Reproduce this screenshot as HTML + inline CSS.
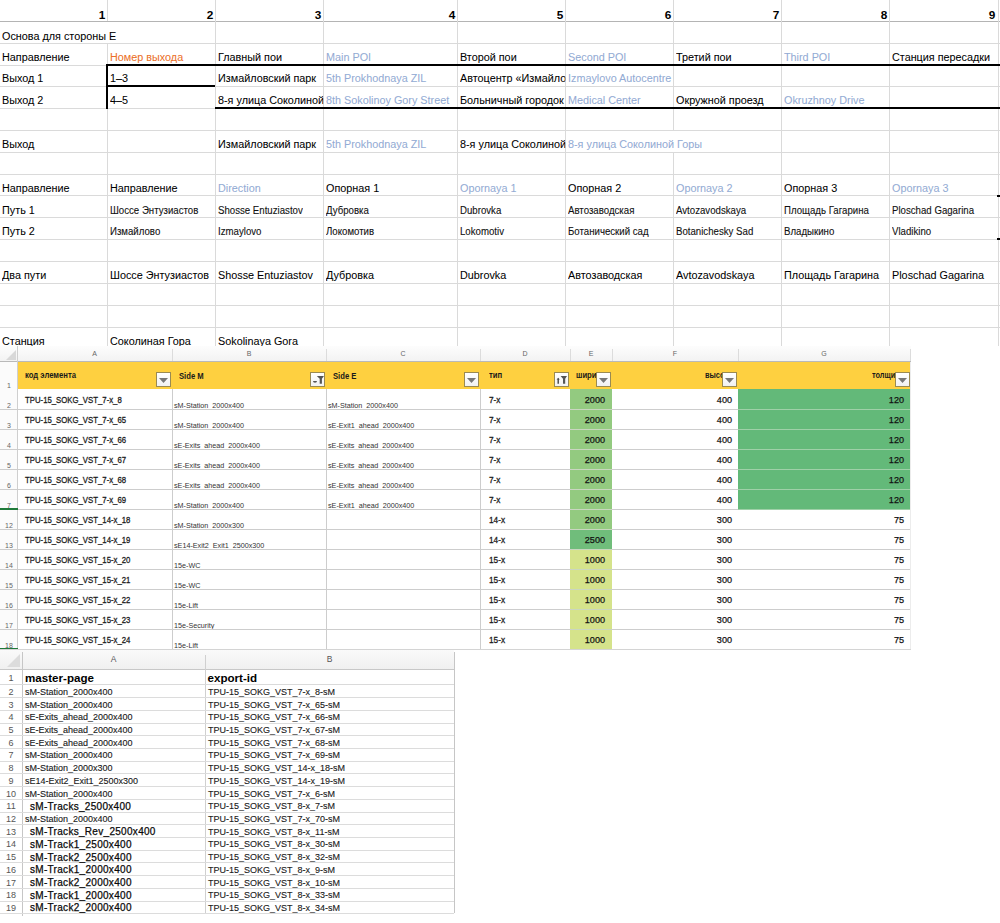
<!DOCTYPE html>
<html><head><meta charset="utf-8"><style>
html,body{margin:0;padding:0;background:#fff;}
body{width:1000px;height:923px;position:relative;overflow:hidden;font-family:"Liberation Sans", sans-serif;}
body div{position:absolute;}
</style></head><body>
<div style="top:10.01px;height:15.34px;font-family:'Liberation Sans', sans-serif;font-size:11.8px;line-height:11.8px;color:#000;font-weight:bold;white-space:pre;left:45.2px;width:60px;text-align:right;">1</div><div style="top:10.01px;height:15.34px;font-family:'Liberation Sans', sans-serif;font-size:11.8px;line-height:11.8px;color:#000;font-weight:bold;white-space:pre;left:153.2px;width:60px;text-align:right;">2</div><div style="top:10.01px;height:15.34px;font-family:'Liberation Sans', sans-serif;font-size:11.8px;line-height:11.8px;color:#000;font-weight:bold;white-space:pre;left:261.2px;width:60px;text-align:right;">3</div><div style="top:10.01px;height:15.34px;font-family:'Liberation Sans', sans-serif;font-size:11.8px;line-height:11.8px;color:#000;font-weight:bold;white-space:pre;left:395.2px;width:60px;text-align:right;">4</div><div style="top:10.01px;height:15.34px;font-family:'Liberation Sans', sans-serif;font-size:11.8px;line-height:11.8px;color:#000;font-weight:bold;white-space:pre;left:503.20000000000005px;width:60px;text-align:right;">5</div><div style="top:10.01px;height:15.34px;font-family:'Liberation Sans', sans-serif;font-size:11.8px;line-height:11.8px;color:#000;font-weight:bold;white-space:pre;left:611.2px;width:60px;text-align:right;">6</div><div style="top:10.01px;height:15.34px;font-family:'Liberation Sans', sans-serif;font-size:11.8px;line-height:11.8px;color:#000;font-weight:bold;white-space:pre;left:719.2px;width:60px;text-align:right;">7</div><div style="top:10.01px;height:15.34px;font-family:'Liberation Sans', sans-serif;font-size:11.8px;line-height:11.8px;color:#000;font-weight:bold;white-space:pre;left:827.2px;width:60px;text-align:right;">8</div><div style="top:10.01px;height:15.34px;font-family:'Liberation Sans', sans-serif;font-size:11.8px;line-height:11.8px;color:#000;font-weight:bold;white-space:pre;left:935.3px;width:60px;text-align:right;">9</div><div style="left:0px;top:21px;width:1000px;height:1px;background:#b4b4b4"></div><div style="left:0px;top:43px;width:1000px;height:1px;background:#dadada"></div><div style="left:0px;top:65px;width:1000px;height:1px;background:#dadada"></div><div style="left:0px;top:86px;width:1000px;height:1px;background:#dadada"></div><div style="left:0px;top:108px;width:1000px;height:1px;background:#dadada"></div><div style="left:0px;top:130px;width:1000px;height:1px;background:#dadada"></div><div style="left:0px;top:152px;width:1000px;height:1px;background:#dadada"></div><div style="left:0px;top:174px;width:1000px;height:1px;background:#dadada"></div><div style="left:0px;top:195px;width:1000px;height:1px;background:#dadada"></div><div style="left:0px;top:217px;width:1000px;height:1px;background:#dadada"></div><div style="left:0px;top:239px;width:1000px;height:1px;background:#dadada"></div><div style="left:0px;top:261px;width:1000px;height:1px;background:#dadada"></div><div style="left:0px;top:283px;width:1000px;height:1px;background:#dadada"></div><div style="left:0px;top:305px;width:1000px;height:1px;background:#dadada"></div><div style="left:0px;top:327px;width:1000px;height:1px;background:#dadada"></div><div style="left:215px;top:21px;width:1px;height:22px;background:#dadada"></div><div style="left:323px;top:21px;width:1px;height:22px;background:#dadada"></div><div style="left:457px;top:21px;width:1px;height:22px;background:#dadada"></div><div style="left:565px;top:21px;width:1px;height:22px;background:#dadada"></div><div style="left:673px;top:21px;width:1px;height:22px;background:#dadada"></div><div style="left:781px;top:21px;width:1px;height:22px;background:#dadada"></div><div style="left:889px;top:21px;width:1px;height:22px;background:#dadada"></div><div style="left:998px;top:21px;width:1px;height:22px;background:#dadada"></div><div style="left:107px;top:43px;width:1px;height:22px;background:#dadada"></div><div style="left:215px;top:43px;width:1px;height:22px;background:#dadada"></div><div style="left:323px;top:43px;width:1px;height:22px;background:#dadada"></div><div style="left:457px;top:43px;width:1px;height:22px;background:#dadada"></div><div style="left:565px;top:43px;width:1px;height:22px;background:#dadada"></div><div style="left:673px;top:43px;width:1px;height:22px;background:#dadada"></div><div style="left:781px;top:43px;width:1px;height:22px;background:#dadada"></div><div style="left:889px;top:43px;width:1px;height:22px;background:#dadada"></div><div style="left:998px;top:43px;width:1px;height:22px;background:#dadada"></div><div style="left:107px;top:65px;width:1px;height:21px;background:#dadada"></div><div style="left:215px;top:65px;width:1px;height:21px;background:#dadada"></div><div style="left:323px;top:65px;width:1px;height:21px;background:#dadada"></div><div style="left:457px;top:65px;width:1px;height:21px;background:#dadada"></div><div style="left:565px;top:65px;width:1px;height:21px;background:#dadada"></div><div style="left:673px;top:65px;width:1px;height:21px;background:#dadada"></div><div style="left:781px;top:65px;width:1px;height:21px;background:#dadada"></div><div style="left:889px;top:65px;width:1px;height:21px;background:#dadada"></div><div style="left:998px;top:65px;width:1px;height:21px;background:#dadada"></div><div style="left:107px;top:86px;width:1px;height:22px;background:#dadada"></div><div style="left:215px;top:86px;width:1px;height:22px;background:#dadada"></div><div style="left:323px;top:86px;width:1px;height:22px;background:#dadada"></div><div style="left:457px;top:86px;width:1px;height:22px;background:#dadada"></div><div style="left:565px;top:86px;width:1px;height:22px;background:#dadada"></div><div style="left:673px;top:86px;width:1px;height:22px;background:#dadada"></div><div style="left:781px;top:86px;width:1px;height:22px;background:#dadada"></div><div style="left:889px;top:86px;width:1px;height:22px;background:#dadada"></div><div style="left:998px;top:86px;width:1px;height:22px;background:#dadada"></div><div style="left:107px;top:108px;width:1px;height:22px;background:#dadada"></div><div style="left:215px;top:108px;width:1px;height:22px;background:#dadada"></div><div style="left:323px;top:108px;width:1px;height:22px;background:#dadada"></div><div style="left:457px;top:108px;width:1px;height:22px;background:#dadada"></div><div style="left:565px;top:108px;width:1px;height:22px;background:#dadada"></div><div style="left:673px;top:108px;width:1px;height:22px;background:#dadada"></div><div style="left:781px;top:108px;width:1px;height:22px;background:#dadada"></div><div style="left:889px;top:108px;width:1px;height:22px;background:#dadada"></div><div style="left:998px;top:108px;width:1px;height:22px;background:#dadada"></div><div style="left:107px;top:130px;width:1px;height:22px;background:#dadada"></div><div style="left:215px;top:130px;width:1px;height:22px;background:#dadada"></div><div style="left:323px;top:130px;width:1px;height:22px;background:#dadada"></div><div style="left:457px;top:130px;width:1px;height:22px;background:#dadada"></div><div style="left:565px;top:130px;width:1px;height:22px;background:#dadada"></div><div style="left:781px;top:130px;width:1px;height:22px;background:#dadada"></div><div style="left:889px;top:130px;width:1px;height:22px;background:#dadada"></div><div style="left:998px;top:130px;width:1px;height:22px;background:#dadada"></div><div style="left:107px;top:152px;width:1px;height:22px;background:#dadada"></div><div style="left:215px;top:152px;width:1px;height:22px;background:#dadada"></div><div style="left:323px;top:152px;width:1px;height:22px;background:#dadada"></div><div style="left:457px;top:152px;width:1px;height:22px;background:#dadada"></div><div style="left:565px;top:152px;width:1px;height:22px;background:#dadada"></div><div style="left:673px;top:152px;width:1px;height:22px;background:#dadada"></div><div style="left:781px;top:152px;width:1px;height:22px;background:#dadada"></div><div style="left:889px;top:152px;width:1px;height:22px;background:#dadada"></div><div style="left:998px;top:152px;width:1px;height:22px;background:#dadada"></div><div style="left:107px;top:174px;width:1px;height:21px;background:#dadada"></div><div style="left:215px;top:174px;width:1px;height:21px;background:#dadada"></div><div style="left:323px;top:174px;width:1px;height:21px;background:#dadada"></div><div style="left:457px;top:174px;width:1px;height:21px;background:#dadada"></div><div style="left:565px;top:174px;width:1px;height:21px;background:#dadada"></div><div style="left:673px;top:174px;width:1px;height:21px;background:#dadada"></div><div style="left:781px;top:174px;width:1px;height:21px;background:#dadada"></div><div style="left:889px;top:174px;width:1px;height:21px;background:#dadada"></div><div style="left:998px;top:174px;width:1px;height:21px;background:#dadada"></div><div style="left:107px;top:195px;width:1px;height:22px;background:#dadada"></div><div style="left:215px;top:195px;width:1px;height:22px;background:#dadada"></div><div style="left:323px;top:195px;width:1px;height:22px;background:#dadada"></div><div style="left:457px;top:195px;width:1px;height:22px;background:#dadada"></div><div style="left:565px;top:195px;width:1px;height:22px;background:#dadada"></div><div style="left:673px;top:195px;width:1px;height:22px;background:#dadada"></div><div style="left:781px;top:195px;width:1px;height:22px;background:#dadada"></div><div style="left:889px;top:195px;width:1px;height:22px;background:#dadada"></div><div style="left:998px;top:195px;width:1px;height:22px;background:#dadada"></div><div style="left:107px;top:217px;width:1px;height:22px;background:#dadada"></div><div style="left:215px;top:217px;width:1px;height:22px;background:#dadada"></div><div style="left:323px;top:217px;width:1px;height:22px;background:#dadada"></div><div style="left:457px;top:217px;width:1px;height:22px;background:#dadada"></div><div style="left:565px;top:217px;width:1px;height:22px;background:#dadada"></div><div style="left:673px;top:217px;width:1px;height:22px;background:#dadada"></div><div style="left:781px;top:217px;width:1px;height:22px;background:#dadada"></div><div style="left:889px;top:217px;width:1px;height:22px;background:#dadada"></div><div style="left:998px;top:217px;width:1px;height:22px;background:#dadada"></div><div style="left:107px;top:239px;width:1px;height:22px;background:#dadada"></div><div style="left:215px;top:239px;width:1px;height:22px;background:#dadada"></div><div style="left:323px;top:239px;width:1px;height:22px;background:#dadada"></div><div style="left:457px;top:239px;width:1px;height:22px;background:#dadada"></div><div style="left:565px;top:239px;width:1px;height:22px;background:#dadada"></div><div style="left:673px;top:239px;width:1px;height:22px;background:#dadada"></div><div style="left:781px;top:239px;width:1px;height:22px;background:#dadada"></div><div style="left:889px;top:239px;width:1px;height:22px;background:#dadada"></div><div style="left:998px;top:239px;width:1px;height:22px;background:#dadada"></div><div style="left:107px;top:261px;width:1px;height:22px;background:#dadada"></div><div style="left:215px;top:261px;width:1px;height:22px;background:#dadada"></div><div style="left:323px;top:261px;width:1px;height:22px;background:#dadada"></div><div style="left:457px;top:261px;width:1px;height:22px;background:#dadada"></div><div style="left:565px;top:261px;width:1px;height:22px;background:#dadada"></div><div style="left:673px;top:261px;width:1px;height:22px;background:#dadada"></div><div style="left:781px;top:261px;width:1px;height:22px;background:#dadada"></div><div style="left:889px;top:261px;width:1px;height:22px;background:#dadada"></div><div style="left:998px;top:261px;width:1px;height:22px;background:#dadada"></div><div style="left:107px;top:283px;width:1px;height:22px;background:#dadada"></div><div style="left:215px;top:283px;width:1px;height:22px;background:#dadada"></div><div style="left:323px;top:283px;width:1px;height:22px;background:#dadada"></div><div style="left:457px;top:283px;width:1px;height:22px;background:#dadada"></div><div style="left:565px;top:283px;width:1px;height:22px;background:#dadada"></div><div style="left:673px;top:283px;width:1px;height:22px;background:#dadada"></div><div style="left:781px;top:283px;width:1px;height:22px;background:#dadada"></div><div style="left:889px;top:283px;width:1px;height:22px;background:#dadada"></div><div style="left:998px;top:283px;width:1px;height:22px;background:#dadada"></div><div style="left:107px;top:305px;width:1px;height:22px;background:#dadada"></div><div style="left:215px;top:305px;width:1px;height:22px;background:#dadada"></div><div style="left:323px;top:305px;width:1px;height:22px;background:#dadada"></div><div style="left:457px;top:305px;width:1px;height:22px;background:#dadada"></div><div style="left:565px;top:305px;width:1px;height:22px;background:#dadada"></div><div style="left:673px;top:305px;width:1px;height:22px;background:#dadada"></div><div style="left:781px;top:305px;width:1px;height:22px;background:#dadada"></div><div style="left:889px;top:305px;width:1px;height:22px;background:#dadada"></div><div style="left:998px;top:305px;width:1px;height:22px;background:#dadada"></div><div style="left:107px;top:327px;width:1px;height:18.5px;background:#dadada"></div><div style="left:215px;top:327px;width:1px;height:18.5px;background:#dadada"></div><div style="left:323px;top:327px;width:1px;height:18.5px;background:#dadada"></div><div style="left:457px;top:327px;width:1px;height:18.5px;background:#dadada"></div><div style="left:565px;top:327px;width:1px;height:18.5px;background:#dadada"></div><div style="left:673px;top:327px;width:1px;height:18.5px;background:#dadada"></div><div style="left:781px;top:327px;width:1px;height:18.5px;background:#dadada"></div><div style="left:889px;top:327px;width:1px;height:18.5px;background:#dadada"></div><div style="left:998px;top:327px;width:1px;height:18.5px;background:#dadada"></div><div style="left:107px;top:0px;width:1px;height:21px;background:#dadada"></div><div style="left:215px;top:0px;width:1px;height:21px;background:#dadada"></div><div style="left:323px;top:0px;width:1px;height:21px;background:#dadada"></div><div style="left:457px;top:0px;width:1px;height:21px;background:#dadada"></div><div style="left:565px;top:0px;width:1px;height:21px;background:#dadada"></div><div style="left:673px;top:0px;width:1px;height:21px;background:#dadada"></div><div style="left:781px;top:0px;width:1px;height:21px;background:#dadada"></div><div style="left:889px;top:0px;width:1px;height:21px;background:#dadada"></div><div style="left:998px;top:0px;width:1px;height:21px;background:#dadada"></div><div style="left:107px;top:64px;width:893px;height:2px;background:#000"></div><div style="left:106px;top:64px;width:2px;height:45px;background:#000"></div><div style="left:107px;top:85px;width:108px;height:2px;background:#000"></div><div style="left:215px;top:107px;width:785px;height:2px;background:#000"></div><div style="left:997px;top:195px;width:3px;height:2px;background:#000"></div><div style="left:997px;top:238px;width:3px;height:2px;background:#000"></div><div style="top:29.60px;height:15.21px;font-family:'Liberation Sans', sans-serif;font-size:11.7px;line-height:11.7px;color:#000;font-weight:normal;white-space:pre;-webkit-text-stroke:0.05px #000;left:1.6px;transform:scaleX(0.925);transform-origin:0 0;width:1079.35px;overflow:hidden;">Основа для стороны E</div><div style="top:50.60px;height:15.21px;font-family:'Liberation Sans', sans-serif;font-size:11.7px;line-height:11.7px;color:#000;font-weight:normal;white-space:pre;-webkit-text-stroke:0.05px #000;left:1.6px;transform:scaleX(0.925);transform-origin:0 0;width:113.95px;overflow:hidden;">Направление</div><div style="top:50.60px;height:15.21px;font-family:'Liberation Sans', sans-serif;font-size:11.7px;line-height:11.7px;color:#ec7028;font-weight:normal;white-space:pre;-webkit-text-stroke:0.05px #ec7028;left:110px;transform:scaleX(0.925);transform-origin:0 0;width:113.51px;overflow:hidden;">Номер выхода</div><div style="top:50.60px;height:15.21px;font-family:'Liberation Sans', sans-serif;font-size:11.7px;line-height:11.7px;color:#000;font-weight:normal;white-space:pre;-webkit-text-stroke:0.05px #000;left:218px;transform:scaleX(0.925);transform-origin:0 0;width:113.51px;overflow:hidden;">Главный пои</div><div style="top:50.60px;height:15.21px;font-family:'Liberation Sans', sans-serif;font-size:11.7px;line-height:11.7px;color:#93abd4;font-weight:normal;white-space:pre;-webkit-text-stroke:0.05px #93abd4;left:326px;transform:scaleX(0.925);transform-origin:0 0;width:141.62px;overflow:hidden;">Main POI</div><div style="top:50.60px;height:15.21px;font-family:'Liberation Sans', sans-serif;font-size:11.7px;line-height:11.7px;color:#000;font-weight:normal;white-space:pre;-webkit-text-stroke:0.05px #000;left:460px;transform:scaleX(0.925);transform-origin:0 0;width:113.51px;overflow:hidden;">Второй пои</div><div style="top:50.60px;height:15.21px;font-family:'Liberation Sans', sans-serif;font-size:11.7px;line-height:11.7px;color:#93abd4;font-weight:normal;white-space:pre;-webkit-text-stroke:0.05px #93abd4;left:568px;transform:scaleX(0.925);transform-origin:0 0;width:113.51px;overflow:hidden;">Second POI</div><div style="top:50.60px;height:15.21px;font-family:'Liberation Sans', sans-serif;font-size:11.7px;line-height:11.7px;color:#000;font-weight:normal;white-space:pre;-webkit-text-stroke:0.05px #000;left:676px;transform:scaleX(0.925);transform-origin:0 0;width:113.51px;overflow:hidden;">Третий пои</div><div style="top:50.60px;height:15.21px;font-family:'Liberation Sans', sans-serif;font-size:11.7px;line-height:11.7px;color:#93abd4;font-weight:normal;white-space:pre;-webkit-text-stroke:0.05px #93abd4;left:784px;transform:scaleX(0.925);transform-origin:0 0;width:113.51px;overflow:hidden;">Third POI</div><div style="top:50.60px;height:15.21px;font-family:'Liberation Sans', sans-serif;font-size:11.7px;line-height:11.7px;color:#000;font-weight:normal;white-space:pre;-webkit-text-stroke:0.05px #000;left:892px;transform:scaleX(0.925);transform-origin:0 0;width:116.76px;overflow:hidden;">Станция пересадки</div><div style="top:72.10px;height:15.21px;font-family:'Liberation Sans', sans-serif;font-size:11.7px;line-height:11.7px;color:#000;font-weight:normal;white-space:pre;-webkit-text-stroke:0.05px #000;left:1.6px;transform:scaleX(0.925);transform-origin:0 0;width:113.95px;overflow:hidden;">Выход 1</div><div style="top:72.10px;height:15.21px;font-family:'Liberation Sans', sans-serif;font-size:11.7px;line-height:11.7px;color:#000;font-weight:normal;white-space:pre;-webkit-text-stroke:0.05px #000;left:110px;transform:scaleX(0.925);transform-origin:0 0;width:113.51px;overflow:hidden;">1–3</div><div style="top:72.10px;height:15.21px;font-family:'Liberation Sans', sans-serif;font-size:11.7px;line-height:11.7px;color:#000;font-weight:normal;white-space:pre;-webkit-text-stroke:0.05px #000;left:218px;transform:scaleX(0.925);transform-origin:0 0;width:113.51px;overflow:hidden;">Измайловский парк</div><div style="top:72.10px;height:15.21px;font-family:'Liberation Sans', sans-serif;font-size:11.7px;line-height:11.7px;color:#93abd4;font-weight:normal;white-space:pre;-webkit-text-stroke:0.05px #93abd4;left:326px;transform:scaleX(0.925);transform-origin:0 0;width:141.62px;overflow:hidden;">5th Prokhodnaya ZIL</div><div style="top:72.10px;height:15.21px;font-family:'Liberation Sans', sans-serif;font-size:11.7px;line-height:11.7px;color:#000;font-weight:normal;white-space:pre;-webkit-text-stroke:0.05px #000;left:460px;transform:scaleX(0.925);transform-origin:0 0;width:113.51px;overflow:hidden;">Автоцентр «Измайловский»</div><div style="top:72.10px;height:15.21px;font-family:'Liberation Sans', sans-serif;font-size:11.7px;line-height:11.7px;color:#93abd4;font-weight:normal;white-space:pre;-webkit-text-stroke:0.05px #93abd4;left:568px;transform:scaleX(0.925);transform-origin:0 0;width:467.03px;overflow:hidden;">Izmaylovo Autocentre</div><div style="top:94.10px;height:15.21px;font-family:'Liberation Sans', sans-serif;font-size:11.7px;line-height:11.7px;color:#000;font-weight:normal;white-space:pre;-webkit-text-stroke:0.05px #000;left:1.6px;transform:scaleX(0.925);transform-origin:0 0;width:113.95px;overflow:hidden;">Выход 2</div><div style="top:94.10px;height:15.21px;font-family:'Liberation Sans', sans-serif;font-size:11.7px;line-height:11.7px;color:#000;font-weight:normal;white-space:pre;-webkit-text-stroke:0.05px #000;left:110px;transform:scaleX(0.925);transform-origin:0 0;width:113.51px;overflow:hidden;">4–5</div><div style="top:94.10px;height:15.21px;font-family:'Liberation Sans', sans-serif;font-size:11.7px;line-height:11.7px;color:#000;font-weight:normal;white-space:pre;-webkit-text-stroke:0.05px #000;left:218px;transform:scaleX(0.925);transform-origin:0 0;width:113.51px;overflow:hidden;">8-я улица Соколиной Горы</div><div style="top:94.10px;height:15.21px;font-family:'Liberation Sans', sans-serif;font-size:11.7px;line-height:11.7px;color:#93abd4;font-weight:normal;white-space:pre;-webkit-text-stroke:0.05px #93abd4;left:326px;transform:scaleX(0.925);transform-origin:0 0;width:141.62px;overflow:hidden;">8th Sokolinoy Gory Street</div><div style="top:94.10px;height:15.21px;font-family:'Liberation Sans', sans-serif;font-size:11.7px;line-height:11.7px;color:#000;font-weight:normal;white-space:pre;-webkit-text-stroke:0.05px #000;left:460px;transform:scaleX(0.925);transform-origin:0 0;width:113.51px;overflow:hidden;">Больничный городок</div><div style="top:94.10px;height:15.21px;font-family:'Liberation Sans', sans-serif;font-size:11.7px;line-height:11.7px;color:#93abd4;font-weight:normal;white-space:pre;-webkit-text-stroke:0.05px #93abd4;left:568px;transform:scaleX(0.925);transform-origin:0 0;width:113.51px;overflow:hidden;">Medical Center</div><div style="top:94.10px;height:15.21px;font-family:'Liberation Sans', sans-serif;font-size:11.7px;line-height:11.7px;color:#000;font-weight:normal;white-space:pre;-webkit-text-stroke:0.05px #000;left:676px;transform:scaleX(0.925);transform-origin:0 0;width:113.51px;overflow:hidden;">Окружной проезд</div><div style="top:94.10px;height:15.21px;font-family:'Liberation Sans', sans-serif;font-size:11.7px;line-height:11.7px;color:#93abd4;font-weight:normal;white-space:pre;-webkit-text-stroke:0.05px #93abd4;left:784px;transform:scaleX(0.925);transform-origin:0 0;width:233.51px;overflow:hidden;">Okruzhnoy Drive</div><div style="top:138.10px;height:15.21px;font-family:'Liberation Sans', sans-serif;font-size:11.7px;line-height:11.7px;color:#000;font-weight:normal;white-space:pre;-webkit-text-stroke:0.05px #000;left:1.6px;transform:scaleX(0.925);transform-origin:0 0;width:230.70px;overflow:hidden;">Выход</div><div style="top:138.10px;height:15.21px;font-family:'Liberation Sans', sans-serif;font-size:11.7px;line-height:11.7px;color:#000;font-weight:normal;white-space:pre;-webkit-text-stroke:0.05px #000;left:218px;transform:scaleX(0.925);transform-origin:0 0;width:113.51px;overflow:hidden;">Измайловский парк</div><div style="top:138.10px;height:15.21px;font-family:'Liberation Sans', sans-serif;font-size:11.7px;line-height:11.7px;color:#93abd4;font-weight:normal;white-space:pre;-webkit-text-stroke:0.05px #93abd4;left:326px;transform:scaleX(0.925);transform-origin:0 0;width:141.62px;overflow:hidden;">5th Prokhodnaya ZIL</div><div style="top:138.10px;height:15.21px;font-family:'Liberation Sans', sans-serif;font-size:11.7px;line-height:11.7px;color:#000;font-weight:normal;white-space:pre;-webkit-text-stroke:0.05px #000;left:460px;transform:scaleX(0.925);transform-origin:0 0;width:113.51px;overflow:hidden;">8-я улица Соколиной Горы</div><div style="top:138.10px;height:15.21px;font-family:'Liberation Sans', sans-serif;font-size:11.7px;line-height:11.7px;color:#93abd4;font-weight:normal;white-space:pre;-webkit-text-stroke:0.05px #93abd4;left:568px;transform:scaleX(0.925);transform-origin:0 0;width:467.03px;overflow:hidden;">8-я улица Соколиной Горы</div><div style="top:181.60px;height:15.21px;font-family:'Liberation Sans', sans-serif;font-size:11.7px;line-height:11.7px;color:#000;font-weight:normal;white-space:pre;-webkit-text-stroke:0.05px #000;left:1.6px;transform:scaleX(0.925);transform-origin:0 0;width:113.95px;overflow:hidden;">Направление</div><div style="top:181.60px;height:15.21px;font-family:'Liberation Sans', sans-serif;font-size:11.7px;line-height:11.7px;color:#000;font-weight:normal;white-space:pre;-webkit-text-stroke:0.05px #000;left:110px;transform:scaleX(0.925);transform-origin:0 0;width:113.51px;overflow:hidden;">Направление</div><div style="top:181.60px;height:15.21px;font-family:'Liberation Sans', sans-serif;font-size:11.7px;line-height:11.7px;color:#93abd4;font-weight:normal;white-space:pre;-webkit-text-stroke:0.05px #93abd4;left:218px;transform:scaleX(0.925);transform-origin:0 0;width:113.51px;overflow:hidden;">Direction</div><div style="top:181.60px;height:15.21px;font-family:'Liberation Sans', sans-serif;font-size:11.7px;line-height:11.7px;color:#000;font-weight:normal;white-space:pre;-webkit-text-stroke:0.05px #000;left:326px;transform:scaleX(0.925);transform-origin:0 0;width:141.62px;overflow:hidden;">Опорная 1</div><div style="top:181.60px;height:15.21px;font-family:'Liberation Sans', sans-serif;font-size:11.7px;line-height:11.7px;color:#93abd4;font-weight:normal;white-space:pre;-webkit-text-stroke:0.05px #93abd4;left:460px;transform:scaleX(0.925);transform-origin:0 0;width:113.51px;overflow:hidden;">Opornaya 1</div><div style="top:181.60px;height:15.21px;font-family:'Liberation Sans', sans-serif;font-size:11.7px;line-height:11.7px;color:#000;font-weight:normal;white-space:pre;-webkit-text-stroke:0.05px #000;left:568px;transform:scaleX(0.925);transform-origin:0 0;width:113.51px;overflow:hidden;">Опорная 2</div><div style="top:181.60px;height:15.21px;font-family:'Liberation Sans', sans-serif;font-size:11.7px;line-height:11.7px;color:#93abd4;font-weight:normal;white-space:pre;-webkit-text-stroke:0.05px #93abd4;left:676px;transform:scaleX(0.925);transform-origin:0 0;width:113.51px;overflow:hidden;">Opornaya 2</div><div style="top:181.60px;height:15.21px;font-family:'Liberation Sans', sans-serif;font-size:11.7px;line-height:11.7px;color:#000;font-weight:normal;white-space:pre;-webkit-text-stroke:0.05px #000;left:784px;transform:scaleX(0.925);transform-origin:0 0;width:113.51px;overflow:hidden;">Опорная 3</div><div style="top:181.60px;height:15.21px;font-family:'Liberation Sans', sans-serif;font-size:11.7px;line-height:11.7px;color:#93abd4;font-weight:normal;white-space:pre;-webkit-text-stroke:0.05px #93abd4;left:892px;transform:scaleX(0.925);transform-origin:0 0;width:116.76px;overflow:hidden;">Opornaya 3</div><div style="top:203.60px;height:15.21px;font-family:'Liberation Sans', sans-serif;font-size:11.7px;line-height:11.7px;color:#000;font-weight:normal;white-space:pre;-webkit-text-stroke:0.05px #000;left:1.6px;transform:scaleX(0.925);transform-origin:0 0;width:113.95px;overflow:hidden;">Путь 1</div><div style="top:205.53px;height:13.00px;font-family:'Liberation Sans', sans-serif;font-size:10px;line-height:10px;color:#111;font-weight:normal;white-space:pre;-webkit-text-stroke:0.1px #111;left:110px;transform:scaleX(0.965);transform-origin:0 0;width:108.81px;overflow:hidden;">Шоссе Энтузиастов</div><div style="top:205.53px;height:13.00px;font-family:'Liberation Sans', sans-serif;font-size:10px;line-height:10px;color:#111;font-weight:normal;white-space:pre;-webkit-text-stroke:0.1px #111;left:218px;transform:scaleX(0.965);transform-origin:0 0;width:108.81px;overflow:hidden;">Shosse Entuziastov</div><div style="top:205.53px;height:13.00px;font-family:'Liberation Sans', sans-serif;font-size:10px;line-height:10px;color:#111;font-weight:normal;white-space:pre;-webkit-text-stroke:0.1px #111;left:326px;transform:scaleX(0.965);transform-origin:0 0;width:135.75px;overflow:hidden;">Дубровка</div><div style="top:205.53px;height:13.00px;font-family:'Liberation Sans', sans-serif;font-size:10px;line-height:10px;color:#111;font-weight:normal;white-space:pre;-webkit-text-stroke:0.1px #111;left:460px;transform:scaleX(0.965);transform-origin:0 0;width:108.81px;overflow:hidden;">Dubrovka</div><div style="top:205.53px;height:13.00px;font-family:'Liberation Sans', sans-serif;font-size:10px;line-height:10px;color:#111;font-weight:normal;white-space:pre;-webkit-text-stroke:0.1px #111;left:568px;transform:scaleX(0.965);transform-origin:0 0;width:108.81px;overflow:hidden;">Автозаводская</div><div style="top:205.53px;height:13.00px;font-family:'Liberation Sans', sans-serif;font-size:10px;line-height:10px;color:#111;font-weight:normal;white-space:pre;-webkit-text-stroke:0.1px #111;left:676px;transform:scaleX(0.965);transform-origin:0 0;width:108.81px;overflow:hidden;">Avtozavodskaya</div><div style="top:205.53px;height:13.00px;font-family:'Liberation Sans', sans-serif;font-size:10px;line-height:10px;color:#111;font-weight:normal;white-space:pre;-webkit-text-stroke:0.1px #111;left:784px;transform:scaleX(0.965);transform-origin:0 0;width:108.81px;overflow:hidden;">Площадь Гагарина</div><div style="top:205.53px;height:13.00px;font-family:'Liberation Sans', sans-serif;font-size:10px;line-height:10px;color:#111;font-weight:normal;white-space:pre;-webkit-text-stroke:0.1px #111;left:892px;transform:scaleX(0.965);transform-origin:0 0;width:111.92px;overflow:hidden;">Ploschad Gagarina</div><div style="top:224.60px;height:15.21px;font-family:'Liberation Sans', sans-serif;font-size:11.7px;line-height:11.7px;color:#000;font-weight:normal;white-space:pre;-webkit-text-stroke:0.05px #000;left:1.6px;transform:scaleX(0.925);transform-origin:0 0;width:113.95px;overflow:hidden;">Путь 2</div><div style="top:226.53px;height:13.00px;font-family:'Liberation Sans', sans-serif;font-size:10px;line-height:10px;color:#111;font-weight:normal;white-space:pre;-webkit-text-stroke:0.1px #111;left:110px;transform:scaleX(0.965);transform-origin:0 0;width:108.81px;overflow:hidden;">Измайлово</div><div style="top:226.53px;height:13.00px;font-family:'Liberation Sans', sans-serif;font-size:10px;line-height:10px;color:#111;font-weight:normal;white-space:pre;-webkit-text-stroke:0.1px #111;left:218px;transform:scaleX(0.965);transform-origin:0 0;width:108.81px;overflow:hidden;">Izmaylovo</div><div style="top:226.53px;height:13.00px;font-family:'Liberation Sans', sans-serif;font-size:10px;line-height:10px;color:#111;font-weight:normal;white-space:pre;-webkit-text-stroke:0.1px #111;left:326px;transform:scaleX(0.965);transform-origin:0 0;width:135.75px;overflow:hidden;">Локомотив</div><div style="top:226.53px;height:13.00px;font-family:'Liberation Sans', sans-serif;font-size:10px;line-height:10px;color:#111;font-weight:normal;white-space:pre;-webkit-text-stroke:0.1px #111;left:460px;transform:scaleX(0.965);transform-origin:0 0;width:108.81px;overflow:hidden;">Lokomotiv</div><div style="top:226.53px;height:13.00px;font-family:'Liberation Sans', sans-serif;font-size:10px;line-height:10px;color:#111;font-weight:normal;white-space:pre;-webkit-text-stroke:0.1px #111;left:568px;transform:scaleX(0.965);transform-origin:0 0;width:108.81px;overflow:hidden;">Ботанический сад</div><div style="top:226.53px;height:13.00px;font-family:'Liberation Sans', sans-serif;font-size:10px;line-height:10px;color:#111;font-weight:normal;white-space:pre;-webkit-text-stroke:0.1px #111;left:676px;transform:scaleX(0.965);transform-origin:0 0;width:108.81px;overflow:hidden;">Botanichesky Sad</div><div style="top:226.53px;height:13.00px;font-family:'Liberation Sans', sans-serif;font-size:10px;line-height:10px;color:#111;font-weight:normal;white-space:pre;-webkit-text-stroke:0.1px #111;left:784px;transform:scaleX(0.965);transform-origin:0 0;width:108.81px;overflow:hidden;">Владыкино</div><div style="top:226.53px;height:13.00px;font-family:'Liberation Sans', sans-serif;font-size:10px;line-height:10px;color:#111;font-weight:normal;white-space:pre;-webkit-text-stroke:0.1px #111;left:892px;transform:scaleX(0.965);transform-origin:0 0;width:111.92px;overflow:hidden;">Vladikino</div><div style="top:268.60px;height:15.21px;font-family:'Liberation Sans', sans-serif;font-size:11.7px;line-height:11.7px;color:#000;font-weight:normal;white-space:pre;-webkit-text-stroke:0.05px #000;left:1.6px;transform:scaleX(0.925);transform-origin:0 0;width:113.95px;overflow:hidden;">Два пути</div><div style="top:268.60px;height:15.21px;font-family:'Liberation Sans', sans-serif;font-size:11.7px;line-height:11.7px;color:#000;font-weight:normal;white-space:pre;-webkit-text-stroke:0.05px #000;left:110px;transform:scaleX(0.925);transform-origin:0 0;width:113.51px;overflow:hidden;">Шоссе Энтузиастов</div><div style="top:268.60px;height:15.21px;font-family:'Liberation Sans', sans-serif;font-size:11.7px;line-height:11.7px;color:#000;font-weight:normal;white-space:pre;-webkit-text-stroke:0.05px #000;left:218px;transform:scaleX(0.925);transform-origin:0 0;width:113.51px;overflow:hidden;">Shosse Entuziastov</div><div style="top:268.60px;height:15.21px;font-family:'Liberation Sans', sans-serif;font-size:11.7px;line-height:11.7px;color:#000;font-weight:normal;white-space:pre;-webkit-text-stroke:0.05px #000;left:326px;transform:scaleX(0.925);transform-origin:0 0;width:141.62px;overflow:hidden;">Дубровка</div><div style="top:268.60px;height:15.21px;font-family:'Liberation Sans', sans-serif;font-size:11.7px;line-height:11.7px;color:#000;font-weight:normal;white-space:pre;-webkit-text-stroke:0.05px #000;left:460px;transform:scaleX(0.925);transform-origin:0 0;width:113.51px;overflow:hidden;">Dubrovka</div><div style="top:268.60px;height:15.21px;font-family:'Liberation Sans', sans-serif;font-size:11.7px;line-height:11.7px;color:#000;font-weight:normal;white-space:pre;-webkit-text-stroke:0.05px #000;left:568px;transform:scaleX(0.925);transform-origin:0 0;width:113.51px;overflow:hidden;">Автозаводская</div><div style="top:268.60px;height:15.21px;font-family:'Liberation Sans', sans-serif;font-size:11.7px;line-height:11.7px;color:#000;font-weight:normal;white-space:pre;-webkit-text-stroke:0.05px #000;left:676px;transform:scaleX(0.925);transform-origin:0 0;width:113.51px;overflow:hidden;">Avtozavodskaya</div><div style="top:268.60px;height:15.21px;font-family:'Liberation Sans', sans-serif;font-size:11.7px;line-height:11.7px;color:#000;font-weight:normal;white-space:pre;-webkit-text-stroke:0.05px #000;left:784px;transform:scaleX(0.925);transform-origin:0 0;width:113.51px;overflow:hidden;">Площадь Гагарина</div><div style="top:268.60px;height:15.21px;font-family:'Liberation Sans', sans-serif;font-size:11.7px;line-height:11.7px;color:#000;font-weight:normal;white-space:pre;-webkit-text-stroke:0.05px #000;left:892px;transform:scaleX(0.925);transform-origin:0 0;width:116.76px;overflow:hidden;">Ploschad Gagarina</div><div style="top:334.60px;height:15.21px;font-family:'Liberation Sans', sans-serif;font-size:11.7px;line-height:11.7px;color:#000;font-weight:normal;white-space:pre;-webkit-text-stroke:0.05px #000;left:1.6px;transform:scaleX(0.925);transform-origin:0 0;width:113.95px;overflow:hidden;">Станция</div><div style="top:334.60px;height:15.21px;font-family:'Liberation Sans', sans-serif;font-size:11.7px;line-height:11.7px;color:#000;font-weight:normal;white-space:pre;-webkit-text-stroke:0.05px #000;left:110px;transform:scaleX(0.925);transform-origin:0 0;width:113.51px;overflow:hidden;">Соколиная Гора</div><div style="top:334.60px;height:15.21px;font-family:'Liberation Sans', sans-serif;font-size:11.7px;line-height:11.7px;color:#000;font-weight:normal;white-space:pre;-webkit-text-stroke:0.05px #000;left:218px;transform:scaleX(0.925);transform-origin:0 0;width:845.41px;overflow:hidden;">Sokolinaya Gora</div>
<div style="left:0px;top:346px;width:911px;height:305px;background:#fff"></div><div style="left:0px;top:346px;width:911px;height:16px;background:linear-gradient(#fdfdfd,#f2f2f2)"></div><div style="left:0px;top:361px;width:911px;height:1px;background:#b9b9b9"></div><svg style="position:absolute;left:6px;top:349.5px" width="10" height="10"><polygon points="10,0 10,10 0,10" fill="#d8d8d8"/></svg><div style="top:349.87px;height:9.10px;font-family:'Liberation Sans', sans-serif;font-size:7px;line-height:7px;color:#666;font-weight:normal;white-space:pre;left:74.5px;width:40px;text-align:center;">A</div><div style="top:349.87px;height:9.10px;font-family:'Liberation Sans', sans-serif;font-size:7px;line-height:7px;color:#666;font-weight:normal;white-space:pre;left:229.0px;width:40px;text-align:center;">B</div><div style="top:349.87px;height:9.10px;font-family:'Liberation Sans', sans-serif;font-size:7px;line-height:7px;color:#666;font-weight:normal;white-space:pre;left:383.0px;width:40px;text-align:center;">C</div><div style="top:349.87px;height:9.10px;font-family:'Liberation Sans', sans-serif;font-size:7px;line-height:7px;color:#666;font-weight:normal;white-space:pre;left:505.0px;width:40px;text-align:center;">D</div><div style="top:349.87px;height:9.10px;font-family:'Liberation Sans', sans-serif;font-size:7px;line-height:7px;color:#666;font-weight:normal;white-space:pre;left:571.0px;width:40px;text-align:center;">E</div><div style="top:349.87px;height:9.10px;font-family:'Liberation Sans', sans-serif;font-size:7px;line-height:7px;color:#666;font-weight:normal;white-space:pre;left:655.0px;width:40px;text-align:center;">F</div><div style="top:349.87px;height:9.10px;font-family:'Liberation Sans', sans-serif;font-size:7px;line-height:7px;color:#666;font-weight:normal;white-space:pre;left:804.0px;width:40px;text-align:center;">G</div><div style="left:17px;top:349px;width:1px;height:12px;background:#dcdcdc"></div><div style="left:172px;top:349px;width:1px;height:12px;background:#dcdcdc"></div><div style="left:326px;top:349px;width:1px;height:12px;background:#dcdcdc"></div><div style="left:480px;top:349px;width:1px;height:12px;background:#dcdcdc"></div><div style="left:570px;top:349px;width:1px;height:12px;background:#dcdcdc"></div><div style="left:612px;top:349px;width:1px;height:12px;background:#dcdcdc"></div><div style="left:738px;top:349px;width:1px;height:12px;background:#dcdcdc"></div><div style="left:910px;top:349px;width:1px;height:12px;background:#dcdcdc"></div><div style="left:18px;top:362px;width:893px;height:27px;background:#fed040"></div><div style="left:0px;top:362px;width:17px;height:288px;background:#fbfbfb"></div><div style="left:17px;top:346px;width:1px;height:304px;background:#cfcfcf"></div><div style="top:370.07px;height:12.48px;font-family:'Liberation Sans', sans-serif;font-size:9.6px;line-height:9.6px;color:#1a1a1a;font-weight:bold;white-space:pre;left:25px;transform:scaleX(0.8);transform-origin:0 0;">код элемента</div><div style="left:156.3px;top:372.3px;width:13px;height:13px;border:1px solid #9a8a52;background:linear-gradient(#ffffff,#f1f1f1)"></div><svg style="position:absolute;left:159.3px;top:378px" width="9" height="5"><polygon points="0,0 9,0 4.5,5" fill="#777"/></svg><div style="top:370.67px;height:12.48px;font-family:'Liberation Sans', sans-serif;font-size:9.6px;line-height:9.6px;color:#1a1a1a;font-weight:bold;white-space:pre;left:179px;transform:scaleX(0.8);transform-origin:0 0;">Side M</div><div style="left:310.3px;top:372.3px;width:13px;height:13px;border:1px solid #9a8a52;background:linear-gradient(#ffffff,#f1f1f1)"></div><svg style="position:absolute;left:312px;top:375px" width="13" height="10"><path d="M1,6 L5,6 A2,1.8 0 0 1 1,6 Z" fill="#555"/><polygon points="4.8,1 12,1 9.9,3.8 9.9,8.8 7.7,8.8 7.7,3.8" fill="#555"/></svg><div style="top:370.67px;height:12.48px;font-family:'Liberation Sans', sans-serif;font-size:9.6px;line-height:9.6px;color:#1a1a1a;font-weight:bold;white-space:pre;left:333px;transform:scaleX(0.8);transform-origin:0 0;">Side E</div><div style="left:464.3px;top:372.3px;width:13px;height:13px;border:1px solid #9a8a52;background:linear-gradient(#ffffff,#f1f1f1)"></div><svg style="position:absolute;left:467.3px;top:378px" width="9" height="5"><polygon points="0,0 9,0 4.5,5" fill="#777"/></svg><div style="top:370.07px;height:12.48px;font-family:'Liberation Sans', sans-serif;font-size:9.6px;line-height:9.6px;color:#1a1a1a;font-weight:bold;white-space:pre;left:488.5px;transform:scaleX(0.8);transform-origin:0 0;">тип</div><div style="left:554.3px;top:372.3px;width:13px;height:13px;border:1px solid #9a8a52;background:linear-gradient(#ffffff,#f1f1f1)"></div><svg style="position:absolute;left:556px;top:375px" width="13" height="10"><polygon points="0.6,4.6 2.2,2.8 3.8,4.6 2.9,4.6 2.9,8.8 1.5,8.8 1.5,4.6" fill="#444"/><polygon points="4.6,1 11,1 9.2,3.8 9.2,8.8 7,8.8 7,3.8" fill="#555"/></svg><div style="top:370.07px;height:12.48px;font-family:'Liberation Sans', sans-serif;font-size:9.6px;line-height:9.6px;color:#1a1a1a;font-weight:bold;white-space:pre;left:576px;transform:scaleX(0.8);transform-origin:0 0;width:26.25px;overflow:hidden;">ширина</div><div style="left:596.3px;top:372.3px;width:13px;height:13px;border:1px solid #9a8a52;background:linear-gradient(#ffffff,#f1f1f1)"></div><svg style="position:absolute;left:599.3px;top:378px" width="9" height="5"><polygon points="0,0 9,0 4.5,5" fill="#777"/></svg><div style="top:370.07px;height:12.48px;font-family:'Liberation Sans', sans-serif;font-size:9.6px;line-height:9.6px;color:#1a1a1a;font-weight:bold;white-space:pre;left:704.5px;transform:scaleX(0.77);transform-origin:0 0;width:26.62px;overflow:hidden;">высота</div><div style="left:722.3px;top:372.3px;width:13px;height:13px;border:1px solid #9a8a52;background:linear-gradient(#ffffff,#f1f1f1)"></div><svg style="position:absolute;left:725.3px;top:378px" width="9" height="5"><polygon points="0,0 9,0 4.5,5" fill="#777"/></svg><div style="top:370.07px;height:12.48px;font-family:'Liberation Sans', sans-serif;font-size:9.6px;line-height:9.6px;color:#1a1a1a;font-weight:bold;white-space:pre;left:871.5px;transform:scaleX(0.77);transform-origin:0 0;width:34.42px;overflow:hidden;">толщина</div><div style="left:895.3px;top:372.3px;width:13px;height:13px;border:1px solid #9a8a52;background:linear-gradient(#ffffff,#f1f1f1)"></div><svg style="position:absolute;left:898.3px;top:378px" width="9" height="5"><polygon points="0,0 9,0 4.5,5" fill="#777"/></svg><div style="top:381.87px;height:9.10px;font-family:'Liberation Sans', sans-serif;font-size:7px;line-height:7px;color:#666;font-weight:normal;white-space:pre;left:1.0px;width:16px;text-align:center;">1</div><div style="left:570px;top:389px;width:42px;height:20px;background:#93ca80"></div><div style="left:738px;top:389px;width:172px;height:20px;background:#63b979"></div><div style="top:402.27px;height:9.10px;font-family:'Liberation Sans', sans-serif;font-size:7px;line-height:7px;color:#666;font-weight:normal;white-space:pre;left:1.0px;width:16px;text-align:center;">2</div><div style="top:394.77px;height:12.48px;font-family:'Liberation Sans', sans-serif;font-size:9.6px;line-height:9.6px;color:#1a1a1a;font-weight:normal;white-space:pre;-webkit-text-stroke:0.3px #1a1a1a;left:25px;transform:scaleX(0.81);transform-origin:0 0;">TPU-15_SOKG_VST_7-x_8</div><div style="top:401.51px;height:9.36px;font-family:'Liberation Sans', sans-serif;font-size:7.2px;line-height:7.2px;color:#333;font-weight:normal;white-space:pre;left:174px;">sM-Station  2000x400</div><div style="top:401.51px;height:9.36px;font-family:'Liberation Sans', sans-serif;font-size:7.2px;line-height:7.2px;color:#333;font-weight:normal;white-space:pre;left:328px;">sM-Station  2000x400</div><div style="top:394.77px;height:12.48px;font-family:'Liberation Sans', sans-serif;font-size:9.6px;line-height:9.6px;color:#1a1a1a;font-weight:normal;white-space:pre;-webkit-text-stroke:0.3px #1a1a1a;left:488.5px;transform:scaleX(0.86);transform-origin:0 0;">7-x</div><div style="top:394.62px;height:12.87px;font-family:'Liberation Sans', sans-serif;font-size:9.9px;line-height:9.9px;color:#111;font-weight:normal;white-space:pre;-webkit-text-stroke:0.25px #111;left:564.5px;width:40px;text-align:right;transform:scaleX(0.92);transform-origin:100% 0;">2000</div><div style="top:394.62px;height:12.87px;font-family:'Liberation Sans', sans-serif;font-size:9.9px;line-height:9.9px;color:#111;font-weight:normal;white-space:pre;-webkit-text-stroke:0.25px #111;left:691.5px;width:40px;text-align:right;transform:scaleX(0.92);transform-origin:100% 0;">400</div><div style="top:394.62px;height:12.87px;font-family:'Liberation Sans', sans-serif;font-size:9.9px;line-height:9.9px;color:#111;font-weight:normal;white-space:pre;-webkit-text-stroke:0.25px #111;left:863.5px;width:40px;text-align:right;transform:scaleX(0.92);transform-origin:100% 0;">120</div><div style="left:570px;top:409px;width:42px;height:20px;background:#93ca80"></div><div style="left:738px;top:409px;width:172px;height:20px;background:#63b979"></div><div style="top:422.27px;height:9.10px;font-family:'Liberation Sans', sans-serif;font-size:7px;line-height:7px;color:#666;font-weight:normal;white-space:pre;left:1.0px;width:16px;text-align:center;">3</div><div style="top:414.77px;height:12.48px;font-family:'Liberation Sans', sans-serif;font-size:9.6px;line-height:9.6px;color:#1a1a1a;font-weight:normal;white-space:pre;-webkit-text-stroke:0.3px #1a1a1a;left:25px;transform:scaleX(0.81);transform-origin:0 0;">TPU-15_SOKG_VST_7-x_65</div><div style="top:421.51px;height:9.36px;font-family:'Liberation Sans', sans-serif;font-size:7.2px;line-height:7.2px;color:#333;font-weight:normal;white-space:pre;left:174px;">sM-Station  2000x400</div><div style="top:421.51px;height:9.36px;font-family:'Liberation Sans', sans-serif;font-size:7.2px;line-height:7.2px;color:#333;font-weight:normal;white-space:pre;left:328px;">sE-Exit1  ahead  2000x400</div><div style="top:414.77px;height:12.48px;font-family:'Liberation Sans', sans-serif;font-size:9.6px;line-height:9.6px;color:#1a1a1a;font-weight:normal;white-space:pre;-webkit-text-stroke:0.3px #1a1a1a;left:488.5px;transform:scaleX(0.86);transform-origin:0 0;">7-x</div><div style="top:414.62px;height:12.87px;font-family:'Liberation Sans', sans-serif;font-size:9.9px;line-height:9.9px;color:#111;font-weight:normal;white-space:pre;-webkit-text-stroke:0.25px #111;left:564.5px;width:40px;text-align:right;transform:scaleX(0.92);transform-origin:100% 0;">2000</div><div style="top:414.62px;height:12.87px;font-family:'Liberation Sans', sans-serif;font-size:9.9px;line-height:9.9px;color:#111;font-weight:normal;white-space:pre;-webkit-text-stroke:0.25px #111;left:691.5px;width:40px;text-align:right;transform:scaleX(0.92);transform-origin:100% 0;">400</div><div style="top:414.62px;height:12.87px;font-family:'Liberation Sans', sans-serif;font-size:9.9px;line-height:9.9px;color:#111;font-weight:normal;white-space:pre;-webkit-text-stroke:0.25px #111;left:863.5px;width:40px;text-align:right;transform:scaleX(0.92);transform-origin:100% 0;">120</div><div style="left:570px;top:429px;width:42px;height:20px;background:#93ca80"></div><div style="left:738px;top:429px;width:172px;height:20px;background:#63b979"></div><div style="top:442.27px;height:9.10px;font-family:'Liberation Sans', sans-serif;font-size:7px;line-height:7px;color:#666;font-weight:normal;white-space:pre;left:1.0px;width:16px;text-align:center;">4</div><div style="top:434.77px;height:12.48px;font-family:'Liberation Sans', sans-serif;font-size:9.6px;line-height:9.6px;color:#1a1a1a;font-weight:normal;white-space:pre;-webkit-text-stroke:0.3px #1a1a1a;left:25px;transform:scaleX(0.81);transform-origin:0 0;">TPU-15_SOKG_VST_7-x_66</div><div style="top:441.51px;height:9.36px;font-family:'Liberation Sans', sans-serif;font-size:7.2px;line-height:7.2px;color:#333;font-weight:normal;white-space:pre;left:174px;">sE-Exits  ahead  2000x400</div><div style="top:441.51px;height:9.36px;font-family:'Liberation Sans', sans-serif;font-size:7.2px;line-height:7.2px;color:#333;font-weight:normal;white-space:pre;left:328px;">sE-Exits  ahead  2000x400</div><div style="top:434.77px;height:12.48px;font-family:'Liberation Sans', sans-serif;font-size:9.6px;line-height:9.6px;color:#1a1a1a;font-weight:normal;white-space:pre;-webkit-text-stroke:0.3px #1a1a1a;left:488.5px;transform:scaleX(0.86);transform-origin:0 0;">7-x</div><div style="top:434.62px;height:12.87px;font-family:'Liberation Sans', sans-serif;font-size:9.9px;line-height:9.9px;color:#111;font-weight:normal;white-space:pre;-webkit-text-stroke:0.25px #111;left:564.5px;width:40px;text-align:right;transform:scaleX(0.92);transform-origin:100% 0;">2000</div><div style="top:434.62px;height:12.87px;font-family:'Liberation Sans', sans-serif;font-size:9.9px;line-height:9.9px;color:#111;font-weight:normal;white-space:pre;-webkit-text-stroke:0.25px #111;left:691.5px;width:40px;text-align:right;transform:scaleX(0.92);transform-origin:100% 0;">400</div><div style="top:434.62px;height:12.87px;font-family:'Liberation Sans', sans-serif;font-size:9.9px;line-height:9.9px;color:#111;font-weight:normal;white-space:pre;-webkit-text-stroke:0.25px #111;left:863.5px;width:40px;text-align:right;transform:scaleX(0.92);transform-origin:100% 0;">120</div><div style="left:570px;top:449px;width:42px;height:20px;background:#93ca80"></div><div style="left:738px;top:449px;width:172px;height:20px;background:#63b979"></div><div style="top:462.27px;height:9.10px;font-family:'Liberation Sans', sans-serif;font-size:7px;line-height:7px;color:#666;font-weight:normal;white-space:pre;left:1.0px;width:16px;text-align:center;">5</div><div style="top:454.77px;height:12.48px;font-family:'Liberation Sans', sans-serif;font-size:9.6px;line-height:9.6px;color:#1a1a1a;font-weight:normal;white-space:pre;-webkit-text-stroke:0.3px #1a1a1a;left:25px;transform:scaleX(0.81);transform-origin:0 0;">TPU-15_SOKG_VST_7-x_67</div><div style="top:461.51px;height:9.36px;font-family:'Liberation Sans', sans-serif;font-size:7.2px;line-height:7.2px;color:#333;font-weight:normal;white-space:pre;left:174px;">sE-Exits  ahead  2000x400</div><div style="top:461.51px;height:9.36px;font-family:'Liberation Sans', sans-serif;font-size:7.2px;line-height:7.2px;color:#333;font-weight:normal;white-space:pre;left:328px;">sE-Exits  ahead  2000x400</div><div style="top:454.77px;height:12.48px;font-family:'Liberation Sans', sans-serif;font-size:9.6px;line-height:9.6px;color:#1a1a1a;font-weight:normal;white-space:pre;-webkit-text-stroke:0.3px #1a1a1a;left:488.5px;transform:scaleX(0.86);transform-origin:0 0;">7-x</div><div style="top:454.62px;height:12.87px;font-family:'Liberation Sans', sans-serif;font-size:9.9px;line-height:9.9px;color:#111;font-weight:normal;white-space:pre;-webkit-text-stroke:0.25px #111;left:564.5px;width:40px;text-align:right;transform:scaleX(0.92);transform-origin:100% 0;">2000</div><div style="top:454.62px;height:12.87px;font-family:'Liberation Sans', sans-serif;font-size:9.9px;line-height:9.9px;color:#111;font-weight:normal;white-space:pre;-webkit-text-stroke:0.25px #111;left:691.5px;width:40px;text-align:right;transform:scaleX(0.92);transform-origin:100% 0;">400</div><div style="top:454.62px;height:12.87px;font-family:'Liberation Sans', sans-serif;font-size:9.9px;line-height:9.9px;color:#111;font-weight:normal;white-space:pre;-webkit-text-stroke:0.25px #111;left:863.5px;width:40px;text-align:right;transform:scaleX(0.92);transform-origin:100% 0;">120</div><div style="left:570px;top:469px;width:42px;height:20px;background:#93ca80"></div><div style="left:738px;top:469px;width:172px;height:20px;background:#63b979"></div><div style="top:482.27px;height:9.10px;font-family:'Liberation Sans', sans-serif;font-size:7px;line-height:7px;color:#666;font-weight:normal;white-space:pre;left:1.0px;width:16px;text-align:center;">6</div><div style="top:474.77px;height:12.48px;font-family:'Liberation Sans', sans-serif;font-size:9.6px;line-height:9.6px;color:#1a1a1a;font-weight:normal;white-space:pre;-webkit-text-stroke:0.3px #1a1a1a;left:25px;transform:scaleX(0.81);transform-origin:0 0;">TPU-15_SOKG_VST_7-x_68</div><div style="top:481.51px;height:9.36px;font-family:'Liberation Sans', sans-serif;font-size:7.2px;line-height:7.2px;color:#333;font-weight:normal;white-space:pre;left:174px;">sE-Exits  ahead  2000x400</div><div style="top:481.51px;height:9.36px;font-family:'Liberation Sans', sans-serif;font-size:7.2px;line-height:7.2px;color:#333;font-weight:normal;white-space:pre;left:328px;">sE-Exits  ahead  2000x400</div><div style="top:474.77px;height:12.48px;font-family:'Liberation Sans', sans-serif;font-size:9.6px;line-height:9.6px;color:#1a1a1a;font-weight:normal;white-space:pre;-webkit-text-stroke:0.3px #1a1a1a;left:488.5px;transform:scaleX(0.86);transform-origin:0 0;">7-x</div><div style="top:474.62px;height:12.87px;font-family:'Liberation Sans', sans-serif;font-size:9.9px;line-height:9.9px;color:#111;font-weight:normal;white-space:pre;-webkit-text-stroke:0.25px #111;left:564.5px;width:40px;text-align:right;transform:scaleX(0.92);transform-origin:100% 0;">2000</div><div style="top:474.62px;height:12.87px;font-family:'Liberation Sans', sans-serif;font-size:9.9px;line-height:9.9px;color:#111;font-weight:normal;white-space:pre;-webkit-text-stroke:0.25px #111;left:691.5px;width:40px;text-align:right;transform:scaleX(0.92);transform-origin:100% 0;">400</div><div style="top:474.62px;height:12.87px;font-family:'Liberation Sans', sans-serif;font-size:9.9px;line-height:9.9px;color:#111;font-weight:normal;white-space:pre;-webkit-text-stroke:0.25px #111;left:863.5px;width:40px;text-align:right;transform:scaleX(0.92);transform-origin:100% 0;">120</div><div style="left:570px;top:489px;width:42px;height:20px;background:#93ca80"></div><div style="left:738px;top:489px;width:172px;height:20px;background:#63b979"></div><div style="top:502.27px;height:9.10px;font-family:'Liberation Sans', sans-serif;font-size:7px;line-height:7px;color:#666;font-weight:normal;white-space:pre;left:1.0px;width:16px;text-align:center;">7</div><div style="top:494.77px;height:12.48px;font-family:'Liberation Sans', sans-serif;font-size:9.6px;line-height:9.6px;color:#1a1a1a;font-weight:normal;white-space:pre;-webkit-text-stroke:0.3px #1a1a1a;left:25px;transform:scaleX(0.81);transform-origin:0 0;">TPU-15_SOKG_VST_7-x_69</div><div style="top:501.51px;height:9.36px;font-family:'Liberation Sans', sans-serif;font-size:7.2px;line-height:7.2px;color:#333;font-weight:normal;white-space:pre;left:174px;">sM-Station  2000x400</div><div style="top:501.51px;height:9.36px;font-family:'Liberation Sans', sans-serif;font-size:7.2px;line-height:7.2px;color:#333;font-weight:normal;white-space:pre;left:328px;">sE-Exit1  ahead  2000x400</div><div style="top:494.77px;height:12.48px;font-family:'Liberation Sans', sans-serif;font-size:9.6px;line-height:9.6px;color:#1a1a1a;font-weight:normal;white-space:pre;-webkit-text-stroke:0.3px #1a1a1a;left:488.5px;transform:scaleX(0.86);transform-origin:0 0;">7-x</div><div style="top:494.62px;height:12.87px;font-family:'Liberation Sans', sans-serif;font-size:9.9px;line-height:9.9px;color:#111;font-weight:normal;white-space:pre;-webkit-text-stroke:0.25px #111;left:564.5px;width:40px;text-align:right;transform:scaleX(0.92);transform-origin:100% 0;">2000</div><div style="top:494.62px;height:12.87px;font-family:'Liberation Sans', sans-serif;font-size:9.9px;line-height:9.9px;color:#111;font-weight:normal;white-space:pre;-webkit-text-stroke:0.25px #111;left:691.5px;width:40px;text-align:right;transform:scaleX(0.92);transform-origin:100% 0;">400</div><div style="top:494.62px;height:12.87px;font-family:'Liberation Sans', sans-serif;font-size:9.9px;line-height:9.9px;color:#111;font-weight:normal;white-space:pre;-webkit-text-stroke:0.25px #111;left:863.5px;width:40px;text-align:right;transform:scaleX(0.92);transform-origin:100% 0;">120</div><div style="left:570px;top:509px;width:42px;height:20px;background:#93ca80"></div><div style="top:522.27px;height:9.10px;font-family:'Liberation Sans', sans-serif;font-size:7px;line-height:7px;color:#666;font-weight:normal;white-space:pre;left:1.0px;width:16px;text-align:center;">12</div><div style="top:514.77px;height:12.48px;font-family:'Liberation Sans', sans-serif;font-size:9.6px;line-height:9.6px;color:#1a1a1a;font-weight:normal;white-space:pre;-webkit-text-stroke:0.3px #1a1a1a;left:25px;transform:scaleX(0.81);transform-origin:0 0;">TPU-15_SOKG_VST_14-x_18</div><div style="top:521.51px;height:9.36px;font-family:'Liberation Sans', sans-serif;font-size:7.2px;line-height:7.2px;color:#333;font-weight:normal;white-space:pre;left:174px;">sM-Station  2000x300</div><div style="top:514.77px;height:12.48px;font-family:'Liberation Sans', sans-serif;font-size:9.6px;line-height:9.6px;color:#1a1a1a;font-weight:normal;white-space:pre;-webkit-text-stroke:0.3px #1a1a1a;left:488.5px;transform:scaleX(0.86);transform-origin:0 0;">14-x</div><div style="top:514.62px;height:12.87px;font-family:'Liberation Sans', sans-serif;font-size:9.9px;line-height:9.9px;color:#111;font-weight:normal;white-space:pre;-webkit-text-stroke:0.25px #111;left:564.5px;width:40px;text-align:right;transform:scaleX(0.92);transform-origin:100% 0;">2000</div><div style="top:514.62px;height:12.87px;font-family:'Liberation Sans', sans-serif;font-size:9.9px;line-height:9.9px;color:#111;font-weight:normal;white-space:pre;-webkit-text-stroke:0.25px #111;left:691.5px;width:40px;text-align:right;transform:scaleX(0.92);transform-origin:100% 0;">300</div><div style="top:514.62px;height:12.87px;font-family:'Liberation Sans', sans-serif;font-size:9.9px;line-height:9.9px;color:#111;font-weight:normal;white-space:pre;-webkit-text-stroke:0.25px #111;left:863.5px;width:40px;text-align:right;transform:scaleX(0.92);transform-origin:100% 0;">75</div><div style="left:570px;top:529px;width:42px;height:20px;background:#70bd7b"></div><div style="top:542.27px;height:9.10px;font-family:'Liberation Sans', sans-serif;font-size:7px;line-height:7px;color:#666;font-weight:normal;white-space:pre;left:1.0px;width:16px;text-align:center;">13</div><div style="top:534.77px;height:12.48px;font-family:'Liberation Sans', sans-serif;font-size:9.6px;line-height:9.6px;color:#1a1a1a;font-weight:normal;white-space:pre;-webkit-text-stroke:0.3px #1a1a1a;left:25px;transform:scaleX(0.81);transform-origin:0 0;">TPU-15_SOKG_VST_14-x_19</div><div style="top:541.51px;height:9.36px;font-family:'Liberation Sans', sans-serif;font-size:7.2px;line-height:7.2px;color:#333;font-weight:normal;white-space:pre;left:174px;">sE14-Exit2  Exit1  2500x300</div><div style="top:534.77px;height:12.48px;font-family:'Liberation Sans', sans-serif;font-size:9.6px;line-height:9.6px;color:#1a1a1a;font-weight:normal;white-space:pre;-webkit-text-stroke:0.3px #1a1a1a;left:488.5px;transform:scaleX(0.86);transform-origin:0 0;">14-x</div><div style="top:534.62px;height:12.87px;font-family:'Liberation Sans', sans-serif;font-size:9.9px;line-height:9.9px;color:#111;font-weight:normal;white-space:pre;-webkit-text-stroke:0.25px #111;left:564.5px;width:40px;text-align:right;transform:scaleX(0.92);transform-origin:100% 0;">2500</div><div style="top:534.62px;height:12.87px;font-family:'Liberation Sans', sans-serif;font-size:9.9px;line-height:9.9px;color:#111;font-weight:normal;white-space:pre;-webkit-text-stroke:0.25px #111;left:691.5px;width:40px;text-align:right;transform:scaleX(0.92);transform-origin:100% 0;">300</div><div style="top:534.62px;height:12.87px;font-family:'Liberation Sans', sans-serif;font-size:9.9px;line-height:9.9px;color:#111;font-weight:normal;white-space:pre;-webkit-text-stroke:0.25px #111;left:863.5px;width:40px;text-align:right;transform:scaleX(0.92);transform-origin:100% 0;">75</div><div style="left:570px;top:549px;width:42px;height:20px;background:#d5e38b"></div><div style="top:562.27px;height:9.10px;font-family:'Liberation Sans', sans-serif;font-size:7px;line-height:7px;color:#666;font-weight:normal;white-space:pre;left:1.0px;width:16px;text-align:center;">14</div><div style="top:554.77px;height:12.48px;font-family:'Liberation Sans', sans-serif;font-size:9.6px;line-height:9.6px;color:#1a1a1a;font-weight:normal;white-space:pre;-webkit-text-stroke:0.3px #1a1a1a;left:25px;transform:scaleX(0.81);transform-origin:0 0;">TPU-15_SOKG_VST_15-x_20</div><div style="top:561.51px;height:9.36px;font-family:'Liberation Sans', sans-serif;font-size:7.2px;line-height:7.2px;color:#333;font-weight:normal;white-space:pre;left:174px;">15e-WC</div><div style="top:554.77px;height:12.48px;font-family:'Liberation Sans', sans-serif;font-size:9.6px;line-height:9.6px;color:#1a1a1a;font-weight:normal;white-space:pre;-webkit-text-stroke:0.3px #1a1a1a;left:488.5px;transform:scaleX(0.86);transform-origin:0 0;">15-x</div><div style="top:554.62px;height:12.87px;font-family:'Liberation Sans', sans-serif;font-size:9.9px;line-height:9.9px;color:#111;font-weight:normal;white-space:pre;-webkit-text-stroke:0.25px #111;left:564.5px;width:40px;text-align:right;transform:scaleX(0.92);transform-origin:100% 0;">1000</div><div style="top:554.62px;height:12.87px;font-family:'Liberation Sans', sans-serif;font-size:9.9px;line-height:9.9px;color:#111;font-weight:normal;white-space:pre;-webkit-text-stroke:0.25px #111;left:691.5px;width:40px;text-align:right;transform:scaleX(0.92);transform-origin:100% 0;">300</div><div style="top:554.62px;height:12.87px;font-family:'Liberation Sans', sans-serif;font-size:9.9px;line-height:9.9px;color:#111;font-weight:normal;white-space:pre;-webkit-text-stroke:0.25px #111;left:863.5px;width:40px;text-align:right;transform:scaleX(0.92);transform-origin:100% 0;">75</div><div style="left:570px;top:569px;width:42px;height:20px;background:#d5e38b"></div><div style="top:582.27px;height:9.10px;font-family:'Liberation Sans', sans-serif;font-size:7px;line-height:7px;color:#666;font-weight:normal;white-space:pre;left:1.0px;width:16px;text-align:center;">15</div><div style="top:574.77px;height:12.48px;font-family:'Liberation Sans', sans-serif;font-size:9.6px;line-height:9.6px;color:#1a1a1a;font-weight:normal;white-space:pre;-webkit-text-stroke:0.3px #1a1a1a;left:25px;transform:scaleX(0.81);transform-origin:0 0;">TPU-15_SOKG_VST_15-x_21</div><div style="top:581.51px;height:9.36px;font-family:'Liberation Sans', sans-serif;font-size:7.2px;line-height:7.2px;color:#333;font-weight:normal;white-space:pre;left:174px;">15e-WC</div><div style="top:574.77px;height:12.48px;font-family:'Liberation Sans', sans-serif;font-size:9.6px;line-height:9.6px;color:#1a1a1a;font-weight:normal;white-space:pre;-webkit-text-stroke:0.3px #1a1a1a;left:488.5px;transform:scaleX(0.86);transform-origin:0 0;">15-x</div><div style="top:574.62px;height:12.87px;font-family:'Liberation Sans', sans-serif;font-size:9.9px;line-height:9.9px;color:#111;font-weight:normal;white-space:pre;-webkit-text-stroke:0.25px #111;left:564.5px;width:40px;text-align:right;transform:scaleX(0.92);transform-origin:100% 0;">1000</div><div style="top:574.62px;height:12.87px;font-family:'Liberation Sans', sans-serif;font-size:9.9px;line-height:9.9px;color:#111;font-weight:normal;white-space:pre;-webkit-text-stroke:0.25px #111;left:691.5px;width:40px;text-align:right;transform:scaleX(0.92);transform-origin:100% 0;">300</div><div style="top:574.62px;height:12.87px;font-family:'Liberation Sans', sans-serif;font-size:9.9px;line-height:9.9px;color:#111;font-weight:normal;white-space:pre;-webkit-text-stroke:0.25px #111;left:863.5px;width:40px;text-align:right;transform:scaleX(0.92);transform-origin:100% 0;">75</div><div style="left:570px;top:589px;width:42px;height:20px;background:#d5e38b"></div><div style="top:602.27px;height:9.10px;font-family:'Liberation Sans', sans-serif;font-size:7px;line-height:7px;color:#666;font-weight:normal;white-space:pre;left:1.0px;width:16px;text-align:center;">16</div><div style="top:594.77px;height:12.48px;font-family:'Liberation Sans', sans-serif;font-size:9.6px;line-height:9.6px;color:#1a1a1a;font-weight:normal;white-space:pre;-webkit-text-stroke:0.3px #1a1a1a;left:25px;transform:scaleX(0.81);transform-origin:0 0;">TPU-15_SOKG_VST_15-x_22</div><div style="top:601.51px;height:9.36px;font-family:'Liberation Sans', sans-serif;font-size:7.2px;line-height:7.2px;color:#333;font-weight:normal;white-space:pre;left:174px;">15e-Lift</div><div style="top:594.77px;height:12.48px;font-family:'Liberation Sans', sans-serif;font-size:9.6px;line-height:9.6px;color:#1a1a1a;font-weight:normal;white-space:pre;-webkit-text-stroke:0.3px #1a1a1a;left:488.5px;transform:scaleX(0.86);transform-origin:0 0;">15-x</div><div style="top:594.62px;height:12.87px;font-family:'Liberation Sans', sans-serif;font-size:9.9px;line-height:9.9px;color:#111;font-weight:normal;white-space:pre;-webkit-text-stroke:0.25px #111;left:564.5px;width:40px;text-align:right;transform:scaleX(0.92);transform-origin:100% 0;">1000</div><div style="top:594.62px;height:12.87px;font-family:'Liberation Sans', sans-serif;font-size:9.9px;line-height:9.9px;color:#111;font-weight:normal;white-space:pre;-webkit-text-stroke:0.25px #111;left:691.5px;width:40px;text-align:right;transform:scaleX(0.92);transform-origin:100% 0;">300</div><div style="top:594.62px;height:12.87px;font-family:'Liberation Sans', sans-serif;font-size:9.9px;line-height:9.9px;color:#111;font-weight:normal;white-space:pre;-webkit-text-stroke:0.25px #111;left:863.5px;width:40px;text-align:right;transform:scaleX(0.92);transform-origin:100% 0;">75</div><div style="left:570px;top:609px;width:42px;height:20px;background:#d5e38b"></div><div style="top:622.27px;height:9.10px;font-family:'Liberation Sans', sans-serif;font-size:7px;line-height:7px;color:#666;font-weight:normal;white-space:pre;left:1.0px;width:16px;text-align:center;">17</div><div style="top:614.77px;height:12.48px;font-family:'Liberation Sans', sans-serif;font-size:9.6px;line-height:9.6px;color:#1a1a1a;font-weight:normal;white-space:pre;-webkit-text-stroke:0.3px #1a1a1a;left:25px;transform:scaleX(0.81);transform-origin:0 0;">TPU-15_SOKG_VST_15-x_23</div><div style="top:621.51px;height:9.36px;font-family:'Liberation Sans', sans-serif;font-size:7.2px;line-height:7.2px;color:#333;font-weight:normal;white-space:pre;left:174px;">15e-Security</div><div style="top:614.77px;height:12.48px;font-family:'Liberation Sans', sans-serif;font-size:9.6px;line-height:9.6px;color:#1a1a1a;font-weight:normal;white-space:pre;-webkit-text-stroke:0.3px #1a1a1a;left:488.5px;transform:scaleX(0.86);transform-origin:0 0;">15-x</div><div style="top:614.62px;height:12.87px;font-family:'Liberation Sans', sans-serif;font-size:9.9px;line-height:9.9px;color:#111;font-weight:normal;white-space:pre;-webkit-text-stroke:0.25px #111;left:564.5px;width:40px;text-align:right;transform:scaleX(0.92);transform-origin:100% 0;">1000</div><div style="top:614.62px;height:12.87px;font-family:'Liberation Sans', sans-serif;font-size:9.9px;line-height:9.9px;color:#111;font-weight:normal;white-space:pre;-webkit-text-stroke:0.25px #111;left:691.5px;width:40px;text-align:right;transform:scaleX(0.92);transform-origin:100% 0;">300</div><div style="top:614.62px;height:12.87px;font-family:'Liberation Sans', sans-serif;font-size:9.9px;line-height:9.9px;color:#111;font-weight:normal;white-space:pre;-webkit-text-stroke:0.25px #111;left:863.5px;width:40px;text-align:right;transform:scaleX(0.92);transform-origin:100% 0;">75</div><div style="left:570px;top:629px;width:42px;height:20px;background:#d5e38b"></div><div style="top:642.27px;height:9.10px;font-family:'Liberation Sans', sans-serif;font-size:7px;line-height:7px;color:#666;font-weight:normal;white-space:pre;left:1.0px;width:16px;text-align:center;">18</div><div style="top:634.77px;height:12.48px;font-family:'Liberation Sans', sans-serif;font-size:9.6px;line-height:9.6px;color:#1a1a1a;font-weight:normal;white-space:pre;-webkit-text-stroke:0.3px #1a1a1a;left:25px;transform:scaleX(0.81);transform-origin:0 0;">TPU-15_SOKG_VST_15-x_24</div><div style="top:641.51px;height:9.36px;font-family:'Liberation Sans', sans-serif;font-size:7.2px;line-height:7.2px;color:#333;font-weight:normal;white-space:pre;left:174px;">15e-Lift</div><div style="top:634.77px;height:12.48px;font-family:'Liberation Sans', sans-serif;font-size:9.6px;line-height:9.6px;color:#1a1a1a;font-weight:normal;white-space:pre;-webkit-text-stroke:0.3px #1a1a1a;left:488.5px;transform:scaleX(0.86);transform-origin:0 0;">15-x</div><div style="top:634.62px;height:12.87px;font-family:'Liberation Sans', sans-serif;font-size:9.9px;line-height:9.9px;color:#111;font-weight:normal;white-space:pre;-webkit-text-stroke:0.25px #111;left:564.5px;width:40px;text-align:right;transform:scaleX(0.92);transform-origin:100% 0;">1000</div><div style="top:634.62px;height:12.87px;font-family:'Liberation Sans', sans-serif;font-size:9.9px;line-height:9.9px;color:#111;font-weight:normal;white-space:pre;-webkit-text-stroke:0.25px #111;left:691.5px;width:40px;text-align:right;transform:scaleX(0.92);transform-origin:100% 0;">300</div><div style="top:634.62px;height:12.87px;font-family:'Liberation Sans', sans-serif;font-size:9.9px;line-height:9.9px;color:#111;font-weight:normal;white-space:pre;-webkit-text-stroke:0.25px #111;left:863.5px;width:40px;text-align:right;transform:scaleX(0.92);transform-origin:100% 0;">75</div><div style="left:0px;top:409px;width:911px;height:1px;background:#cdcdcd"></div><div style="left:738px;top:409px;width:172px;height:1px;background:#9fd0a8"></div><div style="left:571px;top:409px;width:41px;height:1px;background:#c9d6bf"></div><div style="left:0px;top:429px;width:911px;height:1px;background:#cdcdcd"></div><div style="left:738px;top:429px;width:172px;height:1px;background:#9fd0a8"></div><div style="left:571px;top:429px;width:41px;height:1px;background:#c9d6bf"></div><div style="left:0px;top:449px;width:911px;height:1px;background:#cdcdcd"></div><div style="left:738px;top:449px;width:172px;height:1px;background:#9fd0a8"></div><div style="left:571px;top:449px;width:41px;height:1px;background:#c9d6bf"></div><div style="left:0px;top:469px;width:911px;height:1px;background:#cdcdcd"></div><div style="left:738px;top:469px;width:172px;height:1px;background:#9fd0a8"></div><div style="left:571px;top:469px;width:41px;height:1px;background:#c9d6bf"></div><div style="left:0px;top:489px;width:911px;height:1px;background:#cdcdcd"></div><div style="left:738px;top:489px;width:172px;height:1px;background:#9fd0a8"></div><div style="left:571px;top:489px;width:41px;height:1px;background:#c9d6bf"></div><div style="left:0px;top:509px;width:911px;height:1px;background:#cdcdcd"></div><div style="left:738px;top:509px;width:172px;height:1px;background:#9fd0a8"></div><div style="left:571px;top:509px;width:41px;height:1px;background:#c9d6bf"></div><div style="left:0px;top:529px;width:911px;height:1px;background:#cdcdcd"></div><div style="left:571px;top:529px;width:41px;height:1px;background:#c9d6bf"></div><div style="left:0px;top:549px;width:911px;height:1px;background:#cdcdcd"></div><div style="left:571px;top:549px;width:41px;height:1px;background:#c9d6bf"></div><div style="left:0px;top:569px;width:911px;height:1px;background:#cdcdcd"></div><div style="left:571px;top:569px;width:41px;height:1px;background:#c9d6bf"></div><div style="left:0px;top:589px;width:911px;height:1px;background:#cdcdcd"></div><div style="left:571px;top:589px;width:41px;height:1px;background:#c9d6bf"></div><div style="left:0px;top:609px;width:911px;height:1px;background:#cdcdcd"></div><div style="left:571px;top:609px;width:41px;height:1px;background:#c9d6bf"></div><div style="left:0px;top:629px;width:911px;height:1px;background:#cdcdcd"></div><div style="left:571px;top:629px;width:41px;height:1px;background:#c9d6bf"></div><div style="left:0px;top:649px;width:911px;height:1px;background:#cdcdcd"></div><div style="left:571px;top:649px;width:41px;height:1px;background:#c9d6bf"></div><div style="left:172px;top:389px;width:1px;height:261px;background:#cdcdcd"></div><div style="left:326px;top:389px;width:1px;height:261px;background:#cdcdcd"></div><div style="left:480px;top:389px;width:1px;height:261px;background:#cdcdcd"></div><div style="left:910px;top:362px;width:1px;height:288px;background:#ececec"></div><div style="left:0px;top:508px;width:18px;height:2px;background:#1f7a3a"></div><div style="left:0px;top:648px;width:18px;height:2px;background:#1f7a3a"></div>
<div style="left:0px;top:649px;width:455px;height:274px;background:#fff"></div><div style="left:0px;top:649px;width:911px;height:1px;background:#d4d4d4"></div><div style="left:0px;top:650px;width:454px;height:19px;background:linear-gradient(#fafafa,#f0f0f0)"></div><div style="left:0px;top:669px;width:454px;height:1px;background:#c8c8c8"></div><svg style="position:absolute;left:7px;top:654px" width="13" height="13"><polygon points="13,0 13,13 0,13" fill="#dcdcdc"/></svg><div style="left:22px;top:652px;width:1px;height:264px;background:#c6c6c6"></div><div style="left:204.5px;top:655px;width:1px;height:258px;background:#d0d0d0"></div><div style="left:453.5px;top:652px;width:1px;height:261px;background:#c6c6c6"></div><div style="top:655.40px;height:11.05px;font-family:'Liberation Sans', sans-serif;font-size:8.5px;line-height:8.5px;color:#555;font-weight:normal;white-space:pre;left:93.5px;width:40px;text-align:center;">A</div><div style="top:655.40px;height:11.05px;font-family:'Liberation Sans', sans-serif;font-size:8.5px;line-height:8.5px;color:#555;font-weight:normal;white-space:pre;left:309.5px;width:40px;text-align:center;">B</div><div style="left:0px;top:684px;width:454px;height:1px;background:#dadada"></div><div style="top:674.38px;height:11.70px;font-family:'Liberation Sans', sans-serif;font-size:9px;line-height:9px;color:#555;font-weight:normal;white-space:pre;left:1.0px;width:20px;text-align:center;">1</div><div style="top:672.18px;height:15.08px;font-family:'Liberation Sans', sans-serif;font-size:11.6px;line-height:11.6px;color:#000;font-weight:bold;white-space:pre;left:25px;">master-page</div><div style="top:672.18px;height:15.08px;font-family:'Liberation Sans', sans-serif;font-size:11.6px;line-height:11.6px;color:#000;font-weight:bold;white-space:pre;left:207.5px;">export-id</div><div style="left:0px;top:697px;width:454px;height:1px;background:#dcdcdc"></div><div style="top:687.78px;height:11.70px;font-family:'Liberation Sans', sans-serif;font-size:9px;line-height:9px;color:#555;font-weight:normal;white-space:pre;left:1.0px;width:20px;text-align:center;">2</div><div style="top:687.78px;height:11.70px;font-family:'Liberation Sans', sans-serif;font-size:9px;line-height:9px;color:#1a1a1a;font-weight:normal;white-space:pre;-webkit-text-stroke:0.12px #1a1a1a;left:25px;">sM-Station_2000x400</div><div style="top:687.78px;height:11.70px;font-family:'Liberation Sans', sans-serif;font-size:9px;line-height:9px;color:#1a1a1a;font-weight:normal;white-space:pre;-webkit-text-stroke:0.12px #1a1a1a;left:208px;">TPU-15_SOKG_VST_7-x_8-sM</div><div style="left:0px;top:710px;width:454px;height:1px;background:#dcdcdc"></div><div style="top:700.50px;height:11.70px;font-family:'Liberation Sans', sans-serif;font-size:9px;line-height:9px;color:#555;font-weight:normal;white-space:pre;left:1.0px;width:20px;text-align:center;">3</div><div style="top:700.50px;height:11.70px;font-family:'Liberation Sans', sans-serif;font-size:9px;line-height:9px;color:#1a1a1a;font-weight:normal;white-space:pre;-webkit-text-stroke:0.12px #1a1a1a;left:25px;">sM-Station_2000x400</div><div style="top:700.50px;height:11.70px;font-family:'Liberation Sans', sans-serif;font-size:9px;line-height:9px;color:#1a1a1a;font-weight:normal;white-space:pre;-webkit-text-stroke:0.12px #1a1a1a;left:208px;">TPU-15_SOKG_VST_7-x_65-sM</div><div style="left:0px;top:723px;width:454px;height:1px;background:#dcdcdc"></div><div style="top:713.22px;height:11.70px;font-family:'Liberation Sans', sans-serif;font-size:9px;line-height:9px;color:#555;font-weight:normal;white-space:pre;left:1.0px;width:20px;text-align:center;">4</div><div style="top:713.22px;height:11.70px;font-family:'Liberation Sans', sans-serif;font-size:9px;line-height:9px;color:#1a1a1a;font-weight:normal;white-space:pre;-webkit-text-stroke:0.12px #1a1a1a;left:25px;">sE-Exits_ahead_2000x400</div><div style="top:713.22px;height:11.70px;font-family:'Liberation Sans', sans-serif;font-size:9px;line-height:9px;color:#1a1a1a;font-weight:normal;white-space:pre;-webkit-text-stroke:0.12px #1a1a1a;left:208px;">TPU-15_SOKG_VST_7-x_66-sM</div><div style="left:0px;top:735px;width:454px;height:1px;background:#dcdcdc"></div><div style="top:725.94px;height:11.70px;font-family:'Liberation Sans', sans-serif;font-size:9px;line-height:9px;color:#555;font-weight:normal;white-space:pre;left:1.0px;width:20px;text-align:center;">5</div><div style="top:725.94px;height:11.70px;font-family:'Liberation Sans', sans-serif;font-size:9px;line-height:9px;color:#1a1a1a;font-weight:normal;white-space:pre;-webkit-text-stroke:0.12px #1a1a1a;left:25px;">sE-Exits_ahead_2000x400</div><div style="top:725.94px;height:11.70px;font-family:'Liberation Sans', sans-serif;font-size:9px;line-height:9px;color:#1a1a1a;font-weight:normal;white-space:pre;-webkit-text-stroke:0.12px #1a1a1a;left:208px;">TPU-15_SOKG_VST_7-x_67-sM</div><div style="left:0px;top:748px;width:454px;height:1px;background:#dcdcdc"></div><div style="top:738.66px;height:11.70px;font-family:'Liberation Sans', sans-serif;font-size:9px;line-height:9px;color:#555;font-weight:normal;white-space:pre;left:1.0px;width:20px;text-align:center;">6</div><div style="top:738.66px;height:11.70px;font-family:'Liberation Sans', sans-serif;font-size:9px;line-height:9px;color:#1a1a1a;font-weight:normal;white-space:pre;-webkit-text-stroke:0.12px #1a1a1a;left:25px;">sE-Exits_ahead_2000x400</div><div style="top:738.66px;height:11.70px;font-family:'Liberation Sans', sans-serif;font-size:9px;line-height:9px;color:#1a1a1a;font-weight:normal;white-space:pre;-webkit-text-stroke:0.12px #1a1a1a;left:208px;">TPU-15_SOKG_VST_7-x_68-sM</div><div style="left:0px;top:761px;width:454px;height:1px;background:#dcdcdc"></div><div style="top:751.38px;height:11.70px;font-family:'Liberation Sans', sans-serif;font-size:9px;line-height:9px;color:#555;font-weight:normal;white-space:pre;left:1.0px;width:20px;text-align:center;">7</div><div style="top:751.38px;height:11.70px;font-family:'Liberation Sans', sans-serif;font-size:9px;line-height:9px;color:#1a1a1a;font-weight:normal;white-space:pre;-webkit-text-stroke:0.12px #1a1a1a;left:25px;">sM-Station_2000x400</div><div style="top:751.38px;height:11.70px;font-family:'Liberation Sans', sans-serif;font-size:9px;line-height:9px;color:#1a1a1a;font-weight:normal;white-space:pre;-webkit-text-stroke:0.12px #1a1a1a;left:208px;">TPU-15_SOKG_VST_7-x_69-sM</div><div style="left:0px;top:773px;width:454px;height:1px;background:#dcdcdc"></div><div style="top:764.10px;height:11.70px;font-family:'Liberation Sans', sans-serif;font-size:9px;line-height:9px;color:#555;font-weight:normal;white-space:pre;left:1.0px;width:20px;text-align:center;">8</div><div style="top:764.10px;height:11.70px;font-family:'Liberation Sans', sans-serif;font-size:9px;line-height:9px;color:#1a1a1a;font-weight:normal;white-space:pre;-webkit-text-stroke:0.12px #1a1a1a;left:25px;">sM-Station_2000x300</div><div style="top:764.10px;height:11.70px;font-family:'Liberation Sans', sans-serif;font-size:9px;line-height:9px;color:#1a1a1a;font-weight:normal;white-space:pre;-webkit-text-stroke:0.12px #1a1a1a;left:208px;">TPU-15_SOKG_VST_14-x_18-sM</div><div style="left:0px;top:786px;width:454px;height:1px;background:#dcdcdc"></div><div style="top:776.82px;height:11.70px;font-family:'Liberation Sans', sans-serif;font-size:9px;line-height:9px;color:#555;font-weight:normal;white-space:pre;left:1.0px;width:20px;text-align:center;">9</div><div style="top:776.82px;height:11.70px;font-family:'Liberation Sans', sans-serif;font-size:9px;line-height:9px;color:#1a1a1a;font-weight:normal;white-space:pre;-webkit-text-stroke:0.12px #1a1a1a;left:25px;">sE14-Exit2_Exit1_2500x300</div><div style="top:776.82px;height:11.70px;font-family:'Liberation Sans', sans-serif;font-size:9px;line-height:9px;color:#1a1a1a;font-weight:normal;white-space:pre;-webkit-text-stroke:0.12px #1a1a1a;left:208px;">TPU-15_SOKG_VST_14-x_19-sM</div><div style="left:0px;top:799px;width:454px;height:1px;background:#dcdcdc"></div><div style="top:789.54px;height:11.70px;font-family:'Liberation Sans', sans-serif;font-size:9px;line-height:9px;color:#555;font-weight:normal;white-space:pre;left:1.0px;width:20px;text-align:center;">10</div><div style="top:789.54px;height:11.70px;font-family:'Liberation Sans', sans-serif;font-size:9px;line-height:9px;color:#1a1a1a;font-weight:normal;white-space:pre;-webkit-text-stroke:0.12px #1a1a1a;left:25px;">sM-Station_2000x400</div><div style="top:789.54px;height:11.70px;font-family:'Liberation Sans', sans-serif;font-size:9px;line-height:9px;color:#1a1a1a;font-weight:normal;white-space:pre;-webkit-text-stroke:0.12px #1a1a1a;left:208px;">TPU-15_SOKG_VST_7-x_6-sM</div><div style="left:0px;top:812px;width:454px;height:1px;background:#dcdcdc"></div><div style="top:802.26px;height:11.70px;font-family:'Liberation Sans', sans-serif;font-size:9px;line-height:9px;color:#555;font-weight:normal;white-space:pre;left:1.0px;width:20px;text-align:center;">11</div><div style="top:801.62px;height:13.00px;font-family:'Liberation Sans', sans-serif;font-size:10px;line-height:10px;color:#0a0a0a;font-weight:normal;white-space:pre;-webkit-text-stroke:0.25px #0a0a0a;letter-spacing:0.3px;left:30px;">sM-Tracks_2500x400</div><div style="top:802.26px;height:11.70px;font-family:'Liberation Sans', sans-serif;font-size:9px;line-height:9px;color:#1a1a1a;font-weight:normal;white-space:pre;-webkit-text-stroke:0.12px #1a1a1a;left:208px;">TPU-15_SOKG_VST_8-x_7-sM</div><div style="left:0px;top:824px;width:454px;height:1px;background:#dcdcdc"></div><div style="top:814.98px;height:11.70px;font-family:'Liberation Sans', sans-serif;font-size:9px;line-height:9px;color:#555;font-weight:normal;white-space:pre;left:1.0px;width:20px;text-align:center;">12</div><div style="top:814.98px;height:11.70px;font-family:'Liberation Sans', sans-serif;font-size:9px;line-height:9px;color:#1a1a1a;font-weight:normal;white-space:pre;-webkit-text-stroke:0.12px #1a1a1a;left:25px;">sM-Station_2000x400</div><div style="top:814.98px;height:11.70px;font-family:'Liberation Sans', sans-serif;font-size:9px;line-height:9px;color:#1a1a1a;font-weight:normal;white-space:pre;-webkit-text-stroke:0.12px #1a1a1a;left:208px;">TPU-15_SOKG_VST_7-x_70-sM</div><div style="left:0px;top:837px;width:454px;height:1px;background:#dcdcdc"></div><div style="top:827.70px;height:11.70px;font-family:'Liberation Sans', sans-serif;font-size:9px;line-height:9px;color:#555;font-weight:normal;white-space:pre;left:1.0px;width:20px;text-align:center;">13</div><div style="top:827.05px;height:13.00px;font-family:'Liberation Sans', sans-serif;font-size:10px;line-height:10px;color:#0a0a0a;font-weight:normal;white-space:pre;-webkit-text-stroke:0.25px #0a0a0a;letter-spacing:0.3px;left:30px;">sM-Tracks_Rev_2500x400</div><div style="top:827.70px;height:11.70px;font-family:'Liberation Sans', sans-serif;font-size:9px;line-height:9px;color:#1a1a1a;font-weight:normal;white-space:pre;-webkit-text-stroke:0.12px #1a1a1a;left:208px;">TPU-15_SOKG_VST_8-x_11-sM</div><div style="left:0px;top:850px;width:454px;height:1px;background:#dcdcdc"></div><div style="top:840.42px;height:11.70px;font-family:'Liberation Sans', sans-serif;font-size:9px;line-height:9px;color:#555;font-weight:normal;white-space:pre;left:1.0px;width:20px;text-align:center;">14</div><div style="top:839.77px;height:13.00px;font-family:'Liberation Sans', sans-serif;font-size:10px;line-height:10px;color:#0a0a0a;font-weight:normal;white-space:pre;-webkit-text-stroke:0.25px #0a0a0a;letter-spacing:0.3px;left:30px;">sM-Track1_2500x400</div><div style="top:840.42px;height:11.70px;font-family:'Liberation Sans', sans-serif;font-size:9px;line-height:9px;color:#1a1a1a;font-weight:normal;white-space:pre;-webkit-text-stroke:0.12px #1a1a1a;left:208px;">TPU-15_SOKG_VST_8-x_30-sM</div><div style="left:0px;top:862px;width:454px;height:1px;background:#dcdcdc"></div><div style="top:853.14px;height:11.70px;font-family:'Liberation Sans', sans-serif;font-size:9px;line-height:9px;color:#555;font-weight:normal;white-space:pre;left:1.0px;width:20px;text-align:center;">15</div><div style="top:852.50px;height:13.00px;font-family:'Liberation Sans', sans-serif;font-size:10px;line-height:10px;color:#0a0a0a;font-weight:normal;white-space:pre;-webkit-text-stroke:0.25px #0a0a0a;letter-spacing:0.3px;left:30px;">sM-Track2_2500x400</div><div style="top:853.14px;height:11.70px;font-family:'Liberation Sans', sans-serif;font-size:9px;line-height:9px;color:#1a1a1a;font-weight:normal;white-space:pre;-webkit-text-stroke:0.12px #1a1a1a;left:208px;">TPU-15_SOKG_VST_8-x_32-sM</div><div style="left:0px;top:875px;width:454px;height:1px;background:#dcdcdc"></div><div style="top:865.86px;height:11.70px;font-family:'Liberation Sans', sans-serif;font-size:9px;line-height:9px;color:#555;font-weight:normal;white-space:pre;left:1.0px;width:20px;text-align:center;">16</div><div style="top:865.22px;height:13.00px;font-family:'Liberation Sans', sans-serif;font-size:10px;line-height:10px;color:#0a0a0a;font-weight:normal;white-space:pre;-webkit-text-stroke:0.25px #0a0a0a;letter-spacing:0.3px;left:30px;">sM-Track1_2000x400</div><div style="top:865.86px;height:11.70px;font-family:'Liberation Sans', sans-serif;font-size:9px;line-height:9px;color:#1a1a1a;font-weight:normal;white-space:pre;-webkit-text-stroke:0.12px #1a1a1a;left:208px;">TPU-15_SOKG_VST_8-x_9-sM</div><div style="left:0px;top:888px;width:454px;height:1px;background:#dcdcdc"></div><div style="top:878.58px;height:11.70px;font-family:'Liberation Sans', sans-serif;font-size:9px;line-height:9px;color:#555;font-weight:normal;white-space:pre;left:1.0px;width:20px;text-align:center;">17</div><div style="top:877.94px;height:13.00px;font-family:'Liberation Sans', sans-serif;font-size:10px;line-height:10px;color:#0a0a0a;font-weight:normal;white-space:pre;-webkit-text-stroke:0.25px #0a0a0a;letter-spacing:0.3px;left:30px;">sM-Track2_2000x400</div><div style="top:878.58px;height:11.70px;font-family:'Liberation Sans', sans-serif;font-size:9px;line-height:9px;color:#1a1a1a;font-weight:normal;white-space:pre;-webkit-text-stroke:0.12px #1a1a1a;left:208px;">TPU-15_SOKG_VST_8-x_10-sM</div><div style="left:0px;top:901px;width:454px;height:1px;background:#dcdcdc"></div><div style="top:891.30px;height:11.70px;font-family:'Liberation Sans', sans-serif;font-size:9px;line-height:9px;color:#555;font-weight:normal;white-space:pre;left:1.0px;width:20px;text-align:center;">18</div><div style="top:890.65px;height:13.00px;font-family:'Liberation Sans', sans-serif;font-size:10px;line-height:10px;color:#0a0a0a;font-weight:normal;white-space:pre;-webkit-text-stroke:0.25px #0a0a0a;letter-spacing:0.3px;left:30px;">sM-Track1_2000x400</div><div style="top:891.30px;height:11.70px;font-family:'Liberation Sans', sans-serif;font-size:9px;line-height:9px;color:#1a1a1a;font-weight:normal;white-space:pre;-webkit-text-stroke:0.12px #1a1a1a;left:208px;">TPU-15_SOKG_VST_8-x_33-sM</div><div style="left:0px;top:913px;width:454px;height:1px;background:#dcdcdc"></div><div style="top:904.02px;height:11.70px;font-family:'Liberation Sans', sans-serif;font-size:9px;line-height:9px;color:#555;font-weight:normal;white-space:pre;left:1.0px;width:20px;text-align:center;">19</div><div style="top:903.38px;height:13.00px;font-family:'Liberation Sans', sans-serif;font-size:10px;line-height:10px;color:#0a0a0a;font-weight:normal;white-space:pre;-webkit-text-stroke:0.25px #0a0a0a;letter-spacing:0.3px;left:30px;">sM-Track2_2000x400</div><div style="top:904.02px;height:11.70px;font-family:'Liberation Sans', sans-serif;font-size:9px;line-height:9px;color:#1a1a1a;font-weight:normal;white-space:pre;-webkit-text-stroke:0.12px #1a1a1a;left:208px;">TPU-15_SOKG_VST_8-x_34-sM</div>
</body></html>
